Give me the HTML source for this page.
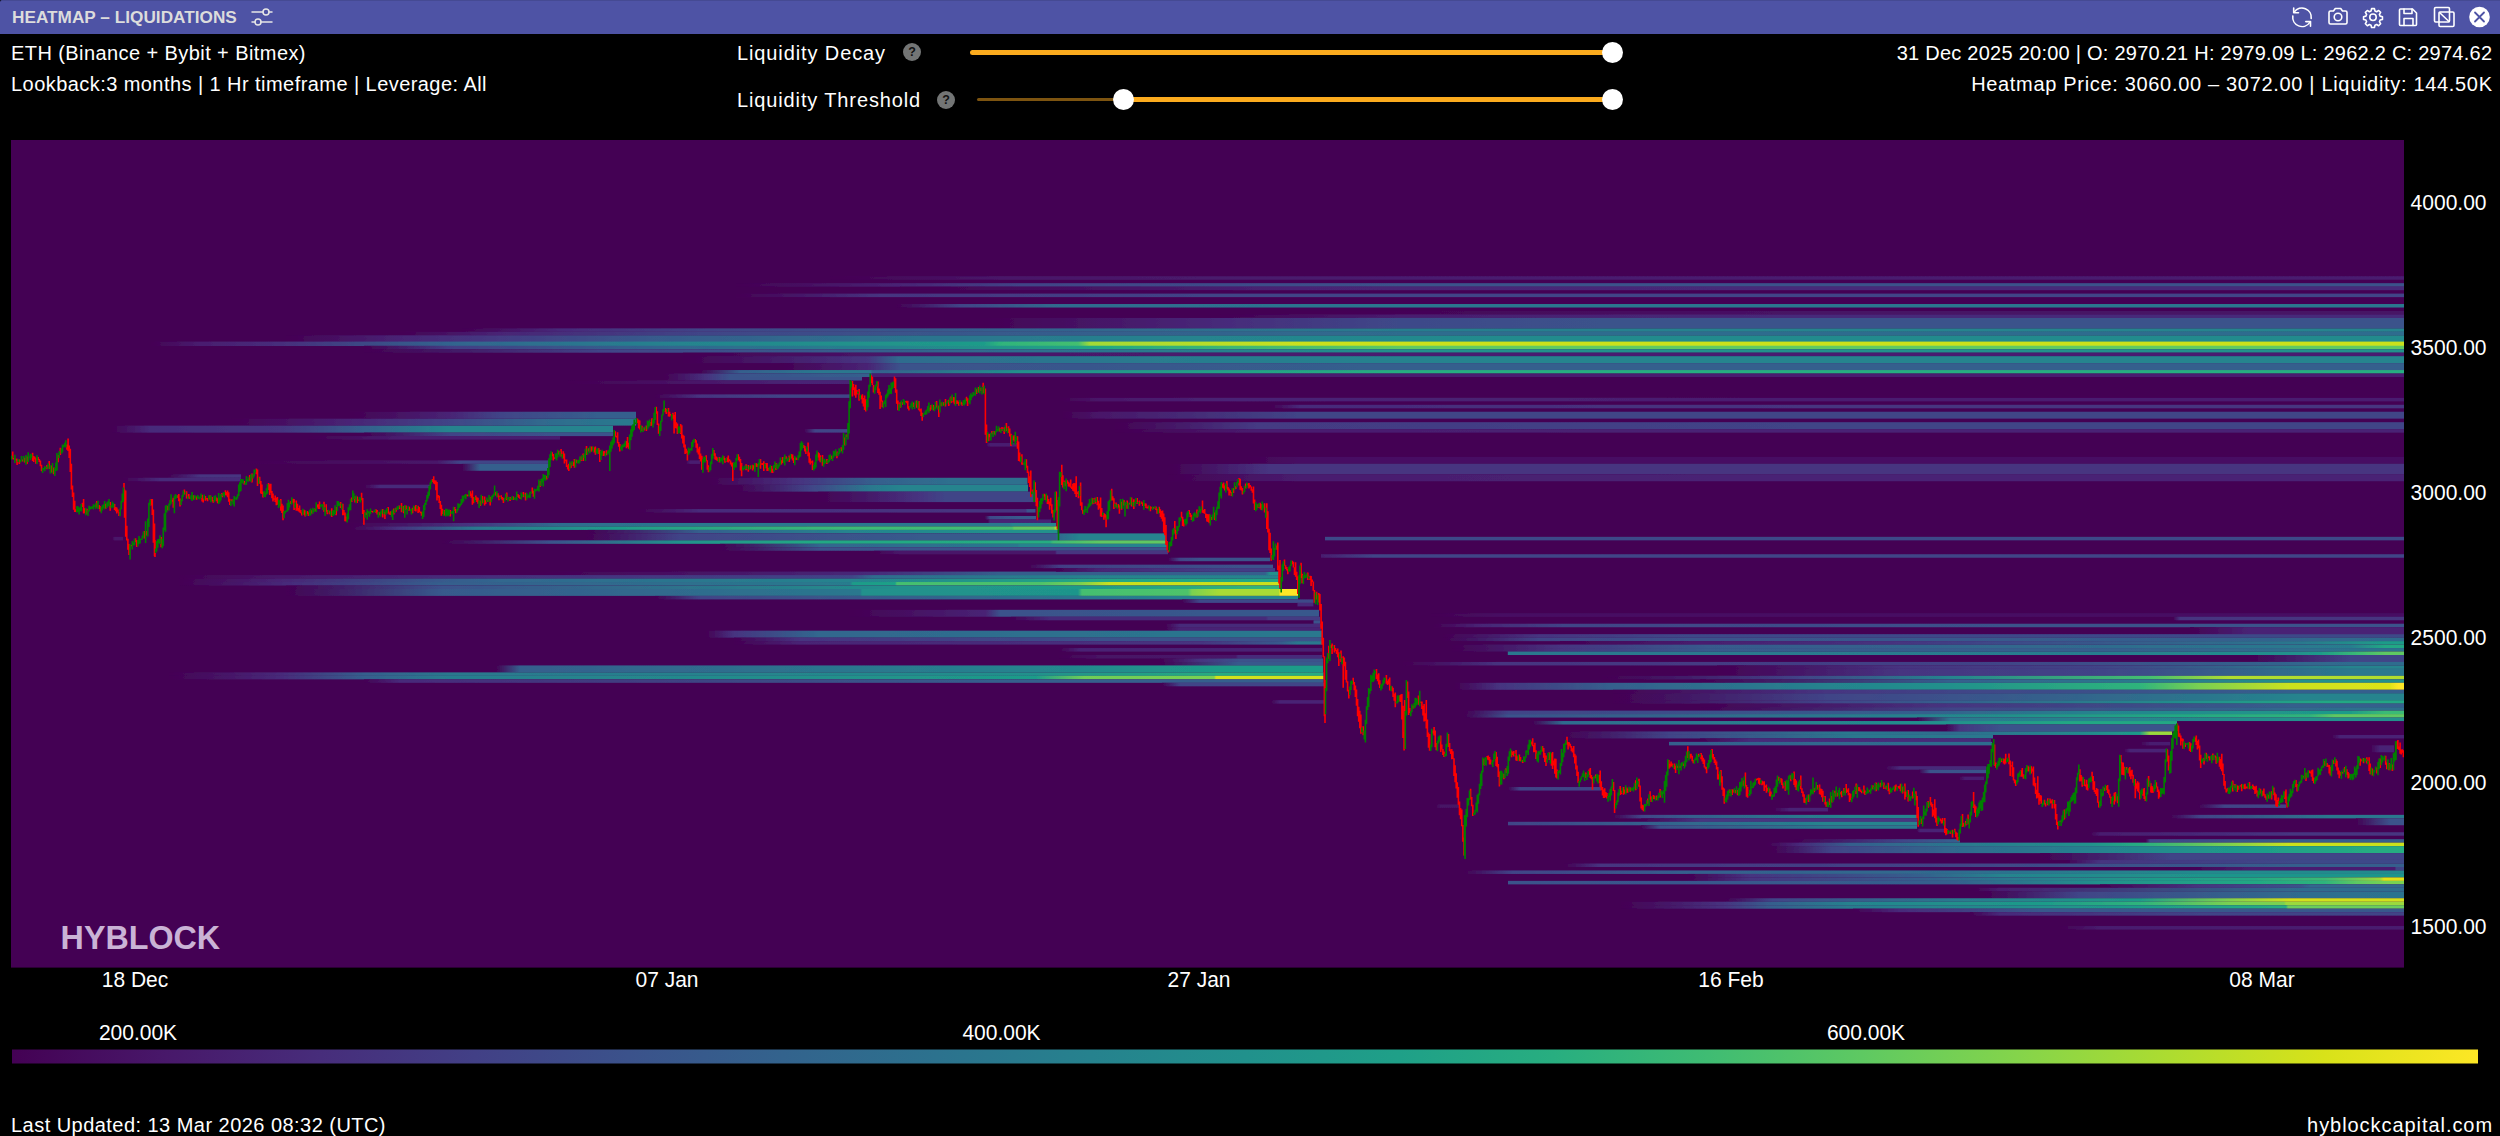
<!DOCTYPE html>
<html lang="en"><head><meta charset="utf-8"><title>Heatmap - Liquidations</title>
<style>
html,body{margin:0;padding:0;background:#000}
body{width:2500px;height:1136px;position:relative;overflow:hidden;font-family:"Liberation Sans",sans-serif;color:#fff}
.abs{position:absolute;white-space:nowrap}
#bar{position:absolute;left:0;top:0;width:2500px;height:33.5px;background:#4e53a5;border-top-left-radius:2px;border-top:1px solid #454a93;box-sizing:border-box}
#title{left:12px;top:6.9px;font-size:17.2px;font-weight:bold;color:#dcdcdc;letter-spacing:0px;line-height:20px}
.t{font-size:20px;line-height:24px;color:#fff}
.ax{font-size:20px;line-height:24px;color:#fff}
.help{position:absolute;width:18px;height:18px;border-radius:50%;background:#737575;color:#111;font-size:12.5px;font-weight:bold;text-align:center;line-height:18.5px}
.thumb{position:absolute;width:21px;height:21px;border-radius:50%;background:#fff}
.trk{position:absolute;height:5.4px;border-radius:2.7px;background:#fbab1e}
svg{position:absolute;left:0;top:0}
</style></head><body>
<div id="bar"></div>
<div class="abs" id="title" style="letter-spacing:0.02px">HEATMAP – LIQUIDATIONS</div>
<svg id="icons" width="2500" height="34" viewBox="0 0 2500 34" fill="none" stroke="#fff" stroke-width="1.6" stroke-linecap="round" stroke-linejoin="round">
<!-- sliders icon -->
<g stroke="#e6e6e6" stroke-width="1.5"><path d="M252 12h11M269 12h3M252 22h3M261 22h11"/><circle cx="266" cy="12" r="3"/><circle cx="258" cy="22" r="3"/></g>
<!-- refresh -->
<g><path d="M2311.2 18.5A9.3 9.3 0 0 0 2294.4 11.900M2292.8 15.950A9.3 9.3 0 0 0 2309.600 22.600"/><path d="M2293.700 8V12.800H2298.500M2310.500 26.200V21.600H2305.800"/></g>
<!-- camera -->
<g><path d="M2329 12.5a1.5 1.5 0 0 1 1.500-1.500h3l1.800-2.500h5.400l1.800 2.500h3a1.500 1.500 0 0 1 1.500 1.500v10a1.500 1.500 0 0 1-1.500 1.500h-15a1.500 1.500 0 0 1-1.500-1.500z"/><circle cx="2338" cy="17" r="3.800"/></g>
<!-- gear -->
<g transform="translate(2373 17.2) scale(0.9)" stroke-width="1.75"><circle r="3.6"/><path d="M-1.600-9.500h3.200l.6 2.600 1.800.8 2.300-1.400 2.200 2.200-1.400 2.300.8 1.800 2.600.6v3.200l-2.600.6-.8 1.800 1.400 2.300-2.200 2.200-2.300-1.400-1.800.8-.6 2.600h-3.200l-.6-2.600-1.800-.8-2.300 1.400-2.200-2.200 1.400-2.300-.8-1.800-2.600-.6v-3.200l2.600-.6.8-1.800-1.400-2.300 2.200-2.200 2.300 1.400 1.800-.8z"/></g>
<!-- save -->
<g><path d="M2400.500 9h12l4 4v11.500a1 1 0 0 1-1 1h-15a1 1 0 0 1-1-1v-14.500a1 1 0 0 1 1-1z"/><path d="M2404 9v4.500h8v-4.500M2404 25.500v-7h9v7"/></g>
<!-- copy -->
<g><rect x="2434.500" y="7.500" width="15" height="14.500" rx="1.200"/><rect x="2439" y="12" width="15" height="14.500" rx="1.200"/><path d="M2439.500 12.500l9.500 9"/></g>
<!-- close -->
<g><circle cx="2479.500" cy="17" r="10.300" fill="#fff" stroke="none"/><path d="M2475 12.500l9 9M2484 12.500l-9 9" stroke="#4e53a5" stroke-width="1.800"/></g>

</svg>

<div class="abs t" id="l1" style="letter-spacing:0.42px;left:11px;top:40.9px">ETH (Binance + Bybit + Bitmex)</div>
<div class="abs t" id="l2" style="letter-spacing:0.44px;left:11px;top:71.9px">Lookback:3 months | 1 Hr timeframe | Leverage: All</div>
<div class="abs t" id="m1" style="letter-spacing:0.89px;left:737px;top:40.9px">Liquidity Decay</div>
<div class="help" style="left:903px;top:43.2px">?</div>
<div class="abs t" id="m2" style="letter-spacing:0.87px;left:737px;top:87.9px">Liquidity Threshold</div>
<div class="help" style="left:937.2px;top:90.6px">?</div>
<div class="trk" style="left:970px;top:49.5px;width:642px"></div>
<div class="thumb" style="left:1601.5px;top:41.7px"></div>
<div class="trk" style="left:977.2px;top:97.75px;width:146px;height:3.7px;background:#7d5410"></div>
<div class="trk" style="left:1123px;top:96.9px;width:489px"></div>
<div class="thumb" style="left:1113.1px;top:89.1px"></div>
<div class="thumb" style="left:1601.5px;top:89.1px"></div>
<div class="abs t" id="r1" style="letter-spacing:0.25px;right:7.75px;top:40.9px">31 Dec 2025 20:00 | O: 2970.21 H: 2979.09 L: 2962.2 C: 2974.62</div>
<div class="abs t" id="r2" style="letter-spacing:0.68px;right:7.3px;top:71.9px">Heatmap Price: 3060.00 – 3072.00 | Liquidity: 144.50K</div>

<svg id="chart" width="2500" height="1136" viewBox="0 0 2500 1136">
<defs>
<filter id="vb" x="0" y="0" width="100%" height="100%" filterUnits="userSpaceOnUse"><feGaussianBlur stdDeviation="0.01 0.6"/></filter>
<clipPath id="cp"><rect x="11" y="140" width="2393" height="827.6"/></clipPath>
<linearGradient id="cbar" x1="0" x2="1" y1="0" y2="0"><stop offset="0.0000" stop-color="#440154"/><stop offset="0.0625" stop-color="#48186a"/><stop offset="0.1250" stop-color="#472d7b"/><stop offset="0.1875" stop-color="#424086"/><stop offset="0.2500" stop-color="#3b528b"/><stop offset="0.3125" stop-color="#33638d"/><stop offset="0.3750" stop-color="#2c728e"/><stop offset="0.4375" stop-color="#26828e"/><stop offset="0.5000" stop-color="#21918c"/><stop offset="0.5625" stop-color="#1fa088"/><stop offset="0.6250" stop-color="#28ae80"/><stop offset="0.6875" stop-color="#3fbc73"/><stop offset="0.7500" stop-color="#5ec962"/><stop offset="0.8125" stop-color="#84d44b"/><stop offset="0.8750" stop-color="#addc30"/><stop offset="0.9375" stop-color="#d8e219"/><stop offset="1.0000" stop-color="#fde725"/></linearGradient>
<linearGradient id="g0" gradientUnits="userSpaceOnUse" x1="830" x2="2404" y1="0" y2="0"><stop offset="0.0000" stop-color="#440154"/><stop offset="0.1080" stop-color="#481769"/><stop offset="0.3621" stop-color="#481d6f"/></linearGradient>
<linearGradient id="g1" gradientUnits="userSpaceOnUse" x1="736" x2="2404" y1="0" y2="0"><stop offset="0.0000" stop-color="#440154"/><stop offset="0.0983" stop-color="#482475"/><stop offset="0.1703" stop-color="#414487"/><stop offset="0.3981" stop-color="#3b528b"/></linearGradient>
<linearGradient id="g2" gradientUnits="userSpaceOnUse" x1="900" x2="2404" y1="0" y2="0"><stop offset="0.0000" stop-color="#440154"/><stop offset="0.2660" stop-color="#482475"/><stop offset="0.5984" stop-color="#472a7a"/></linearGradient>
<linearGradient id="g3" gradientUnits="userSpaceOnUse" x1="736" x2="2404" y1="0" y2="0"><stop offset="0.0000" stop-color="#440154"/><stop offset="0.0863" stop-color="#463480"/><stop offset="0.2782" stop-color="#414487"/></linearGradient>
<linearGradient id="g4" gradientUnits="userSpaceOnUse" x1="896" x2="2404" y1="0" y2="0"><stop offset="0.0000" stop-color="#440154"/><stop offset="0.0424" stop-color="#414487"/><stop offset="0.1088" stop-color="#2f6c8e"/><stop offset="0.3342" stop-color="#2a788e"/></linearGradient>
<linearGradient id="g5" gradientUnits="userSpaceOnUse" x1="1300" x2="2404" y1="0" y2="0"><stop offset="0.0000" stop-color="#440154"/><stop offset="0.4529" stop-color="#471365"/></linearGradient>
<linearGradient id="g6" gradientUnits="userSpaceOnUse" x1="1220" x2="2404" y1="0" y2="0"><stop offset="0.0000" stop-color="#440154"/><stop offset="0.1520" stop-color="#481d6f"/><stop offset="0.4899" stop-color="#472a7a"/></linearGradient>
<linearGradient id="g7" gradientUnits="userSpaceOnUse" x1="980" x2="2404" y1="0" y2="0"><stop offset="0.0000" stop-color="#440154"/><stop offset="0.1685" stop-color="#472a7a"/><stop offset="0.2949" stop-color="#3e4989"/><stop offset="0.4354" stop-color="#3b528b"/></linearGradient>
<linearGradient id="g8" gradientUnits="userSpaceOnUse" x1="462" x2="2404" y1="0" y2="0"><stop offset="0.0000" stop-color="#440154"/><stop offset="0.0505" stop-color="#472a7a"/><stop offset="0.1226" stop-color="#414487"/><stop offset="0.2770" stop-color="#355f8d"/><stop offset="0.4830" stop-color="#287d8e"/><stop offset="0.6890" stop-color="#25848e"/></linearGradient>
<linearGradient id="g9" gradientUnits="userSpaceOnUse" x1="400" x2="2404" y1="0" y2="0"><stop offset="0.0000" stop-color="#440154"/><stop offset="0.0499" stop-color="#482475"/><stop offset="0.1497" stop-color="#414487"/><stop offset="0.2994" stop-color="#375a8c"/><stop offset="0.4990" stop-color="#2f6c8e"/></linearGradient>
<linearGradient id="g10" gradientUnits="userSpaceOnUse" x1="286" x2="2404" y1="0" y2="0"><stop offset="0.0000" stop-color="#440154"/><stop offset="0.0538" stop-color="#482475"/><stop offset="0.1010" stop-color="#443a83"/><stop offset="0.1719" stop-color="#375a8c"/><stop offset="0.2899" stop-color="#2c738e"/><stop offset="0.4315" stop-color="#25848e"/><stop offset="0.5732" stop-color="#228b8d"/></linearGradient>
<linearGradient id="g11" gradientUnits="userSpaceOnUse" x1="151" x2="2404" y1="0" y2="0"><stop offset="0.0000" stop-color="#440154"/><stop offset="0.0217" stop-color="#481d6f"/><stop offset="0.0573" stop-color="#472e7c"/><stop offset="0.1327" stop-color="#32648e"/><stop offset="0.2348" stop-color="#25848e"/><stop offset="0.3697" stop-color="#1e9c89"/><stop offset="0.3768" stop-color="#2fb47c"/><stop offset="0.4115" stop-color="#44bf70"/><stop offset="0.4168" stop-color="#a2da37"/><stop offset="0.5100" stop-color="#cae11f"/></linearGradient>
<linearGradient id="g12" gradientUnits="userSpaceOnUse" x1="364" x2="2404" y1="0" y2="0"><stop offset="0.0000" stop-color="#440154"/><stop offset="0.0422" stop-color="#433e85"/><stop offset="0.1402" stop-color="#32648e"/><stop offset="0.2627" stop-color="#25848e"/><stop offset="0.3608" stop-color="#22a884"/><stop offset="0.5078" stop-color="#5ec962"/></linearGradient>
<linearGradient id="g13" gradientUnits="userSpaceOnUse" x1="364" x2="2404" y1="0" y2="0"><stop offset="0.0000" stop-color="#440154"/><stop offset="0.1157" stop-color="#414487"/><stop offset="0.3118" stop-color="#2f6c8e"/><stop offset="0.5078" stop-color="#21918c"/></linearGradient>
<linearGradient id="g14" gradientUnits="userSpaceOnUse" x1="683" x2="2404" y1="0" y2="0"><stop offset="0.0000" stop-color="#440154"/><stop offset="0.1261" stop-color="#481769"/><stop offset="0.4166" stop-color="#481d6f"/></linearGradient>
<linearGradient id="g15" gradientUnits="userSpaceOnUse" x1="683" x2="2404" y1="0" y2="0"><stop offset="0.0000" stop-color="#440154"/><stop offset="0.1075" stop-color="#463480"/><stop offset="0.1261" stop-color="#2f6c8e"/><stop offset="0.3004" stop-color="#287d8e"/><stop offset="0.4747" stop-color="#25848e"/></linearGradient>
<linearGradient id="g16" gradientUnits="userSpaceOnUse" x1="780" x2="2404" y1="0" y2="0"><stop offset="0.0000" stop-color="#440154"/><stop offset="0.0542" stop-color="#482475"/><stop offset="0.0739" stop-color="#3b528b"/><stop offset="0.3818" stop-color="#355f8d"/></linearGradient>
<linearGradient id="g17" gradientUnits="userSpaceOnUse" x1="700" x2="2404" y1="0" y2="0"><stop offset="0.0000" stop-color="#440154"/><stop offset="0.0235" stop-color="#355f8d"/><stop offset="0.0681" stop-color="#2a788e"/><stop offset="0.1004" stop-color="#2a788e"/><stop offset="0.1009" stop-color="#355f8d"/><stop offset="0.1878" stop-color="#21918c"/><stop offset="0.4108" stop-color="#26ad81"/></linearGradient>
<linearGradient id="g18" gradientUnits="userSpaceOnUse" x1="664" x2="2404" y1="0" y2="0"><stop offset="0.0000" stop-color="#440154"/><stop offset="0.0253" stop-color="#463480"/><stop offset="0.0379" stop-color="#3b528b"/><stop offset="0.1190" stop-color="#355f8d"/><stop offset="0.1195" stop-color="#481d6f"/></linearGradient>
<linearGradient id="g19" gradientUnits="userSpaceOnUse" x1="664" x2="862" y1="0" y2="0"><stop offset="0.0000" stop-color="#440154"/><stop offset="0.2222" stop-color="#463480"/><stop offset="0.3333" stop-color="#3b528b"/></linearGradient>
<linearGradient id="g20" gradientUnits="userSpaceOnUse" x1="568" x2="851" y1="0" y2="0"><stop offset="0.0000" stop-color="#440154"/><stop offset="0.4664" stop-color="#481769"/><stop offset="0.8198" stop-color="#482475"/></linearGradient>
<linearGradient id="g21" gradientUnits="userSpaceOnUse" x1="655" x2="850" y1="0" y2="0"><stop offset="0.0000" stop-color="#440154"/><stop offset="0.2308" stop-color="#463480"/><stop offset="0.6410" stop-color="#414487"/></linearGradient>
<linearGradient id="g22" gradientUnits="userSpaceOnUse" x1="350" x2="636" y1="0" y2="0"><stop offset="0.0000" stop-color="#440154"/><stop offset="0.3497" stop-color="#482475"/><stop offset="0.5245" stop-color="#414487"/><stop offset="0.8741" stop-color="#355f8d"/></linearGradient>
<linearGradient id="g23" gradientUnits="userSpaceOnUse" x1="230" x2="636" y1="0" y2="0"><stop offset="0.0000" stop-color="#440154"/><stop offset="0.2956" stop-color="#482475"/><stop offset="0.5419" stop-color="#414487"/><stop offset="0.7882" stop-color="#2f6c8e"/><stop offset="0.9606" stop-color="#2a788e"/></linearGradient>
<linearGradient id="g24" gradientUnits="userSpaceOnUse" x1="112" x2="613" y1="0" y2="0"><stop offset="0.0000" stop-color="#440154"/><stop offset="0.0758" stop-color="#472a7a"/><stop offset="0.3353" stop-color="#463480"/><stop offset="0.5030" stop-color="#355f8d"/><stop offset="0.6707" stop-color="#25848e"/></linearGradient>
<linearGradient id="g25" gradientUnits="userSpaceOnUse" x1="364" x2="613" y1="0" y2="0"><stop offset="0.0000" stop-color="#440154"/><stop offset="0.3454" stop-color="#414487"/><stop offset="0.7470" stop-color="#3b528b"/></linearGradient>
<linearGradient id="g26" gradientUnits="userSpaceOnUse" x1="308" x2="560" y1="0" y2="0"><stop offset="0.0000" stop-color="#440154"/><stop offset="0.3651" stop-color="#481d6f"/></linearGradient>
<linearGradient id="g27" gradientUnits="userSpaceOnUse" x1="804" x2="849" y1="0" y2="0"><stop offset="0.0000" stop-color="#440154"/><stop offset="0.2444" stop-color="#414487"/></linearGradient>
<linearGradient id="g28" gradientUnits="userSpaceOnUse" x1="238" x2="549" y1="0" y2="0"><stop offset="0.0000" stop-color="#440154"/><stop offset="0.6399" stop-color="#481769"/><stop offset="0.7138" stop-color="#414487"/></linearGradient>
<linearGradient id="g29" gradientUnits="userSpaceOnUse" x1="462" x2="549" y1="0" y2="0"><stop offset="0.0000" stop-color="#440154"/><stop offset="0.2069" stop-color="#355f8d"/></linearGradient>
<linearGradient id="g30" gradientUnits="userSpaceOnUse" x1="168" x2="241" y1="0" y2="0"><stop offset="0.0000" stop-color="#440154"/><stop offset="0.4384" stop-color="#463480"/></linearGradient>
<linearGradient id="g31" gradientUnits="userSpaceOnUse" x1="123" x2="241" y1="0" y2="0"><stop offset="0.0000" stop-color="#440154"/><stop offset="0.3136" stop-color="#472a7a"/></linearGradient>
<linearGradient id="g32" gradientUnits="userSpaceOnUse" x1="364" x2="430" y1="0" y2="0"><stop offset="0.0000" stop-color="#440154"/><stop offset="0.2424" stop-color="#472a7a"/></linearGradient>
<linearGradient id="g33" gradientUnits="userSpaceOnUse" x1="686" x2="700" y1="0" y2="0"><stop offset="0.0000" stop-color="#440154"/><stop offset="0.2857" stop-color="#481d6f"/></linearGradient>
<linearGradient id="g34" gradientUnits="userSpaceOnUse" x1="709" x2="1027.5" y1="0" y2="0"><stop offset="0.0000" stop-color="#440154"/><stop offset="0.2857" stop-color="#463480"/><stop offset="0.5181" stop-color="#355f8d"/><stop offset="0.7567" stop-color="#2e6f8e"/></linearGradient>
<linearGradient id="g35" gradientUnits="userSpaceOnUse" x1="737" x2="1028" y1="0" y2="0"><stop offset="0.0000" stop-color="#440154"/><stop offset="0.2509" stop-color="#414487"/><stop offset="0.4570" stop-color="#2a788e"/><stop offset="0.5670" stop-color="#25848e"/></linearGradient>
<linearGradient id="g36" gradientUnits="userSpaceOnUse" x1="818" x2="1036" y1="0" y2="0"><stop offset="0.0000" stop-color="#440154"/><stop offset="0.4679" stop-color="#463480"/><stop offset="0.5780" stop-color="#414487"/></linearGradient>
<linearGradient id="g37" gradientUnits="userSpaceOnUse" x1="638" x2="1035.5" y1="0" y2="0"><stop offset="0.0000" stop-color="#440154"/><stop offset="0.1560" stop-color="#472a7a"/><stop offset="0.7849" stop-color="#463480"/><stop offset="0.9761" stop-color="#463480"/><stop offset="0.9786" stop-color="#3b528b"/></linearGradient>
<linearGradient id="g38" gradientUnits="userSpaceOnUse" x1="985" x2="1036" y1="0" y2="0"><stop offset="0.0000" stop-color="#440154"/><stop offset="0.0980" stop-color="#3e4989"/><stop offset="0.6863" stop-color="#375a8c"/></linearGradient>
<linearGradient id="g39" gradientUnits="userSpaceOnUse" x1="988" x2="1051" y1="0" y2="0"><stop offset="0.0000" stop-color="#440154"/><stop offset="0.0317" stop-color="#482475"/></linearGradient>
<linearGradient id="g40" gradientUnits="userSpaceOnUse" x1="350" x2="1056" y1="0" y2="0"><stop offset="0.0000" stop-color="#440154"/><stop offset="0.1700" stop-color="#463480"/><stop offset="0.2975" stop-color="#2f6c8e"/><stop offset="0.4958" stop-color="#2a788e"/><stop offset="0.9348" stop-color="#2a788e"/><stop offset="0.9377" stop-color="#25848e"/></linearGradient>
<linearGradient id="g41" gradientUnits="userSpaceOnUse" x1="350" x2="1057.7" y1="0" y2="0"><stop offset="0.0000" stop-color="#440154"/><stop offset="0.0707" stop-color="#463480"/><stop offset="0.1780" stop-color="#2a788e"/><stop offset="0.3759" stop-color="#1e9c89"/><stop offset="0.6966" stop-color="#3bbb75"/><stop offset="0.9354" stop-color="#44bf70"/><stop offset="0.9383" stop-color="#5ec962"/><stop offset="0.9948" stop-color="#63cb5f"/><stop offset="0.9962" stop-color="#a2da37"/></linearGradient>
<linearGradient id="g42" gradientUnits="userSpaceOnUse" x1="588" x2="1057.7" y1="0" y2="0"><stop offset="0.0000" stop-color="#440154"/><stop offset="0.2385" stop-color="#355f8d"/><stop offset="0.5578" stop-color="#25848e"/><stop offset="0.8772" stop-color="#21918c"/></linearGradient>
<linearGradient id="g43" gradientUnits="userSpaceOnUse" x1="586" x2="1166" y1="0" y2="0"><stop offset="0.0000" stop-color="#440154"/><stop offset="0.1621" stop-color="#414487"/><stop offset="0.5759" stop-color="#375a8c"/><stop offset="0.8103" stop-color="#375a8c"/><stop offset="0.8121" stop-color="#31678e"/><stop offset="0.8517" stop-color="#25848e"/></linearGradient>
<linearGradient id="g44" gradientUnits="userSpaceOnUse" x1="442" x2="1167" y1="0" y2="0"><stop offset="0.0000" stop-color="#440154"/><stop offset="0.1490" stop-color="#3b528b"/><stop offset="0.3283" stop-color="#21918c"/><stop offset="0.5034" stop-color="#22a884"/><stop offset="0.8386" stop-color="#26ad81"/><stop offset="0.8428" stop-color="#3bbb75"/><stop offset="0.9076" stop-color="#5ec962"/></linearGradient>
<linearGradient id="g45" gradientUnits="userSpaceOnUse" x1="720" x2="1167" y1="0" y2="0"><stop offset="0.0000" stop-color="#440154"/><stop offset="0.2237" stop-color="#31678e"/><stop offset="0.6667" stop-color="#2a788e"/><stop offset="0.6711" stop-color="#25848e"/></linearGradient>
<linearGradient id="g46" gradientUnits="userSpaceOnUse" x1="720" x2="1167" y1="0" y2="0"><stop offset="0.0000" stop-color="#440154"/><stop offset="0.2237" stop-color="#3b528b"/></linearGradient>
<linearGradient id="g47" gradientUnits="userSpaceOnUse" x1="874" x2="1168" y1="0" y2="0"><stop offset="0.0000" stop-color="#440154"/><stop offset="0.0884" stop-color="#481769"/><stop offset="0.6156" stop-color="#481769"/><stop offset="0.6224" stop-color="#463480"/></linearGradient>
<linearGradient id="g48" gradientUnits="userSpaceOnUse" x1="112" x2="123" y1="0" y2="0"><stop offset="0.0000" stop-color="#440154"/><stop offset="0.2727" stop-color="#481769"/></linearGradient>
<linearGradient id="g49" gradientUnits="userSpaceOnUse" x1="532" x2="1279.5" y1="0" y2="0"><stop offset="0.0000" stop-color="#440154"/><stop offset="0.2247" stop-color="#471365"/><stop offset="0.4575" stop-color="#472a7a"/><stop offset="0.6261" stop-color="#355f8d"/><stop offset="0.9806" stop-color="#355f8d"/><stop offset="0.9873" stop-color="#21918c"/></linearGradient>
<linearGradient id="g50" gradientUnits="userSpaceOnUse" x1="179" x2="1279.5" y1="0" y2="0"><stop offset="0.0000" stop-color="#440154"/><stop offset="0.0918" stop-color="#481769"/><stop offset="0.2390" stop-color="#472a7a"/><stop offset="0.6115" stop-color="#414487"/><stop offset="0.6315" stop-color="#2f6c8e"/><stop offset="0.8369" stop-color="#25848e"/></linearGradient>
<linearGradient id="g51" gradientUnits="userSpaceOnUse" x1="179" x2="1279.5" y1="0" y2="0"><stop offset="0.0000" stop-color="#440154"/><stop offset="0.0918" stop-color="#482475"/><stop offset="0.2390" stop-color="#375a8c"/><stop offset="0.2917" stop-color="#31678e"/><stop offset="0.6115" stop-color="#25848e"/><stop offset="0.8369" stop-color="#22a884"/></linearGradient>
<linearGradient id="g52" gradientUnits="userSpaceOnUse" x1="179" x2="1279.5" y1="0" y2="0"><stop offset="0.0000" stop-color="#440154"/><stop offset="0.0972" stop-color="#472a7a"/><stop offset="0.2390" stop-color="#355f8d"/><stop offset="0.5643" stop-color="#2a788e"/><stop offset="0.6097" stop-color="#287d8e"/><stop offset="0.6124" stop-color="#1e9c89"/><stop offset="0.6506" stop-color="#1fa188"/><stop offset="0.6524" stop-color="#44bf70"/><stop offset="0.7824" stop-color="#4ec36b"/><stop offset="0.8187" stop-color="#7ad151"/><stop offset="0.8460" stop-color="#cae11f"/></linearGradient>
<linearGradient id="g53" gradientUnits="userSpaceOnUse" x1="286" x2="1279.5" y1="0" y2="0"><stop offset="0.0000" stop-color="#440154"/><stop offset="0.1570" stop-color="#3b528b"/><stop offset="0.6200" stop-color="#21918c"/><stop offset="0.8193" stop-color="#1e9c89"/><stop offset="0.9804" stop-color="#2fb47c"/></linearGradient>
<linearGradient id="g54" gradientUnits="userSpaceOnUse" x1="286" x2="1298" y1="0" y2="0"><stop offset="0.0000" stop-color="#440154"/><stop offset="0.1542" stop-color="#375a8c"/><stop offset="0.5672" stop-color="#2a788e"/><stop offset="0.5692" stop-color="#21918c"/><stop offset="0.7826" stop-color="#1f958b"/><stop offset="0.7866" stop-color="#44bf70"/><stop offset="0.8913" stop-color="#4ec36b"/><stop offset="0.8953" stop-color="#7ad151"/><stop offset="0.9229" stop-color="#a8db34"/><stop offset="0.9812" stop-color="#a8db34"/><stop offset="0.9822" stop-color="#fde725"/></linearGradient>
<linearGradient id="g55" gradientUnits="userSpaceOnUse" x1="655" x2="1298" y1="0" y2="0"><stop offset="0.0000" stop-color="#440154"/><stop offset="0.0700" stop-color="#414487"/><stop offset="0.5365" stop-color="#2f6c8e"/><stop offset="0.8476" stop-color="#25848e"/></linearGradient>
<linearGradient id="g56" gradientUnits="userSpaceOnUse" x1="1182" x2="1313.4" y1="0" y2="0"><stop offset="0.0000" stop-color="#440154"/><stop offset="0.1370" stop-color="#3e4989"/></linearGradient>
<linearGradient id="g57" gradientUnits="userSpaceOnUse" x1="1297" x2="1313.4" y1="0" y2="0"><stop offset="0.0000" stop-color="#440154"/><stop offset="0.0610" stop-color="#472a7a"/></linearGradient>
<linearGradient id="g58" gradientUnits="userSpaceOnUse" x1="1168" x2="1270" y1="0" y2="0"><stop offset="0.0000" stop-color="#440154"/><stop offset="0.1176" stop-color="#414487"/><stop offset="0.3137" stop-color="#3b528b"/></linearGradient>
<linearGradient id="g59" gradientUnits="userSpaceOnUse" x1="1028" x2="1273" y1="0" y2="0"><stop offset="0.0000" stop-color="#440154"/><stop offset="0.1306" stop-color="#433e85"/><stop offset="0.8653" stop-color="#3b528b"/></linearGradient>
<linearGradient id="g60" gradientUnits="userSpaceOnUse" x1="1056" x2="1275" y1="0" y2="0"><stop offset="0.0000" stop-color="#440154"/><stop offset="0.2009" stop-color="#482475"/><stop offset="0.7489" stop-color="#433e85"/></linearGradient>
<linearGradient id="g61" gradientUnits="userSpaceOnUse" x1="849" x2="1319" y1="0" y2="0"><stop offset="0.0000" stop-color="#440154"/><stop offset="0.2915" stop-color="#482475"/><stop offset="0.3213" stop-color="#3b528b"/><stop offset="0.7468" stop-color="#38588c"/></linearGradient>
<linearGradient id="g62" gradientUnits="userSpaceOnUse" x1="1011" x2="1320" y1="0" y2="0"><stop offset="0.0000" stop-color="#440154"/><stop offset="0.1262" stop-color="#472a7a"/><stop offset="0.8252" stop-color="#472a7a"/><stop offset="0.8317" stop-color="#443a83"/></linearGradient>
<linearGradient id="g63" gradientUnits="userSpaceOnUse" x1="1313" x2="1320" y1="0" y2="0"><stop offset="0.0000" stop-color="#440154"/><stop offset="0.1429" stop-color="#3b528b"/></linearGradient>
<linearGradient id="g64" gradientUnits="userSpaceOnUse" x1="1165" x2="1321" y1="0" y2="0"><stop offset="0.0000" stop-color="#440154"/><stop offset="0.0962" stop-color="#472a7a"/></linearGradient>
<linearGradient id="g65" gradientUnits="userSpaceOnUse" x1="1165" x2="1321" y1="0" y2="0"><stop offset="0.0000" stop-color="#440154"/><stop offset="0.0962" stop-color="#482475"/></linearGradient>
<linearGradient id="g66" gradientUnits="userSpaceOnUse" x1="706" x2="1322" y1="0" y2="0"><stop offset="0.0000" stop-color="#440154"/><stop offset="0.0455" stop-color="#463480"/><stop offset="0.1818" stop-color="#31678e"/><stop offset="0.5097" stop-color="#2e6f8e"/><stop offset="0.9172" stop-color="#2a788e"/></linearGradient>
<linearGradient id="g67" gradientUnits="userSpaceOnUse" x1="734" x2="1322" y1="0" y2="0"><stop offset="0.0000" stop-color="#440154"/><stop offset="0.1122" stop-color="#463480"/><stop offset="0.6224" stop-color="#3b528b"/></linearGradient>
<linearGradient id="g68" gradientUnits="userSpaceOnUse" x1="734" x2="1322" y1="0" y2="0"><stop offset="0.0000" stop-color="#440154"/><stop offset="0.1122" stop-color="#482475"/><stop offset="0.7925" stop-color="#463480"/><stop offset="0.9286" stop-color="#375a8c"/><stop offset="0.9592" stop-color="#2a788e"/></linearGradient>
<linearGradient id="g69" gradientUnits="userSpaceOnUse" x1="1059" x2="1322" y1="0" y2="0"><stop offset="0.0000" stop-color="#440154"/><stop offset="0.0798" stop-color="#482475"/></linearGradient>
<linearGradient id="g70" gradientUnits="userSpaceOnUse" x1="1059" x2="1322" y1="0" y2="0"><stop offset="0.0000" stop-color="#440154"/><stop offset="0.1559" stop-color="#471365"/><stop offset="0.6730" stop-color="#481769"/><stop offset="0.6806" stop-color="#472a7a"/></linearGradient>
<linearGradient id="g71" gradientUnits="userSpaceOnUse" x1="1160" x2="1323" y1="0" y2="0"><stop offset="0.0000" stop-color="#440154"/><stop offset="0.2454" stop-color="#463480"/><stop offset="0.4908" stop-color="#3b528b"/></linearGradient>
<linearGradient id="g72" gradientUnits="userSpaceOnUse" x1="1160" x2="1323" y1="0" y2="0"><stop offset="0.0000" stop-color="#440154"/><stop offset="0.4785" stop-color="#38588c"/></linearGradient>
<linearGradient id="g73" gradientUnits="userSpaceOnUse" x1="496" x2="1323" y1="0" y2="0"><stop offset="0.0000" stop-color="#440154"/><stop offset="0.0290" stop-color="#355f8d"/><stop offset="0.6602" stop-color="#25848e"/><stop offset="0.8755" stop-color="#1e9c89"/></linearGradient>
<linearGradient id="g74" gradientUnits="userSpaceOnUse" x1="169" x2="1323.5" y1="0" y2="0"><stop offset="0.0000" stop-color="#440154"/><stop offset="0.0961" stop-color="#472a7a"/><stop offset="0.1689" stop-color="#355f8d"/><stop offset="0.2417" stop-color="#2a788e"/><stop offset="0.7510" stop-color="#21918c"/><stop offset="0.9104" stop-color="#26ad81"/></linearGradient>
<linearGradient id="g75" gradientUnits="userSpaceOnUse" x1="169" x2="1323.5" y1="0" y2="0"><stop offset="0.0000" stop-color="#440154"/><stop offset="0.0961" stop-color="#472a7a"/><stop offset="0.1689" stop-color="#355f8d"/><stop offset="0.2417" stop-color="#287d8e"/><stop offset="0.7510" stop-color="#1e9c89"/><stop offset="0.7926" stop-color="#6ece58"/><stop offset="0.9052" stop-color="#7ad151"/><stop offset="0.9069" stop-color="#d2e21b"/></linearGradient>
<linearGradient id="g76" gradientUnits="userSpaceOnUse" x1="364" x2="1323.5" y1="0" y2="0"><stop offset="0.0000" stop-color="#440154"/><stop offset="0.0375" stop-color="#472a7a"/><stop offset="0.6628" stop-color="#355f8d"/></linearGradient>
<linearGradient id="g77" gradientUnits="userSpaceOnUse" x1="1162" x2="1324" y1="0" y2="0"><stop offset="0.0000" stop-color="#440154"/><stop offset="0.1111" stop-color="#414487"/></linearGradient>
<linearGradient id="g78" gradientUnits="userSpaceOnUse" x1="1271" x2="1325" y1="0" y2="0"><stop offset="0.0000" stop-color="#440154"/><stop offset="0.1667" stop-color="#482475"/></linearGradient>
<linearGradient id="g79" gradientUnits="userSpaceOnUse" x1="1060" x2="2404" y1="0" y2="0"><stop offset="0.0000" stop-color="#440154"/><stop offset="0.0298" stop-color="#481769"/><stop offset="0.1332" stop-color="#482475"/><stop offset="0.5506" stop-color="#481d6f"/></linearGradient>
<linearGradient id="g80" gradientUnits="userSpaceOnUse" x1="1271" x2="2404" y1="0" y2="0"><stop offset="0.0000" stop-color="#440154"/><stop offset="0.0256" stop-color="#472a7a"/><stop offset="0.4669" stop-color="#463480"/></linearGradient>
<linearGradient id="g81" gradientUnits="userSpaceOnUse" x1="1063" x2="2404" y1="0" y2="0"><stop offset="0.0000" stop-color="#440154"/><stop offset="0.0276" stop-color="#481769"/><stop offset="0.1745" stop-color="#414487"/></linearGradient>
<linearGradient id="g82" gradientUnits="userSpaceOnUse" x1="1115" x2="2404" y1="0" y2="0"><stop offset="0.0000" stop-color="#440154"/><stop offset="0.1094" stop-color="#443a83"/><stop offset="0.5314" stop-color="#414487"/></linearGradient>
<linearGradient id="g83" gradientUnits="userSpaceOnUse" x1="1115" x2="2404" y1="0" y2="0"><stop offset="0.0000" stop-color="#440154"/><stop offset="0.1094" stop-color="#481d6f"/><stop offset="0.5314" stop-color="#482475"/></linearGradient>
<linearGradient id="g84" gradientUnits="userSpaceOnUse" x1="1248" x2="2404" y1="0" y2="0"><stop offset="0.0000" stop-color="#440154"/><stop offset="0.0450" stop-color="#471063"/></linearGradient>
<linearGradient id="g85" gradientUnits="userSpaceOnUse" x1="1170" x2="2404" y1="0" y2="0"><stop offset="0.0000" stop-color="#440154"/><stop offset="0.0794" stop-color="#463480"/></linearGradient>
<linearGradient id="g86" gradientUnits="userSpaceOnUse" x1="1168" x2="2404" y1="0" y2="0"><stop offset="0.0000" stop-color="#440154"/><stop offset="0.1068" stop-color="#481d6f"/><stop offset="0.5113" stop-color="#482475"/></linearGradient>
<linearGradient id="g88" gradientUnits="userSpaceOnUse" x1="1321" x2="2404" y1="0" y2="0"><stop offset="0.0000" stop-color="#481d6f"/><stop offset="0.0480" stop-color="#414487"/></linearGradient>
<linearGradient id="g89" gradientUnits="userSpaceOnUse" x1="986" x2="1018" y1="0" y2="0"><stop offset="0.0000" stop-color="#440154"/><stop offset="0.1250" stop-color="#481d6f"/></linearGradient>
<linearGradient id="g90" gradientUnits="userSpaceOnUse" x1="1431" x2="2404" y1="0" y2="0"><stop offset="0.0000" stop-color="#440154"/><stop offset="0.0709" stop-color="#471063"/></linearGradient>
<linearGradient id="g91" gradientUnits="userSpaceOnUse" x1="2173" x2="2404" y1="0" y2="0"><stop offset="0.0000" stop-color="#440154"/><stop offset="0.0303" stop-color="#463480"/></linearGradient>
<linearGradient id="g92" gradientUnits="userSpaceOnUse" x1="1434" x2="2404" y1="0" y2="0"><stop offset="0.0000" stop-color="#440154"/><stop offset="0.0474" stop-color="#482475"/><stop offset="0.1330" stop-color="#414487"/><stop offset="0.5835" stop-color="#3b528b"/></linearGradient>
<linearGradient id="g93" gradientUnits="userSpaceOnUse" x1="2190" x2="2404" y1="0" y2="0"><stop offset="0.0000" stop-color="#440154"/><stop offset="0.2804" stop-color="#482475"/></linearGradient>
<linearGradient id="g94" gradientUnits="userSpaceOnUse" x1="1443" x2="2404" y1="0" y2="0"><stop offset="0.0000" stop-color="#440154"/><stop offset="0.0989" stop-color="#463480"/><stop offset="0.2591" stop-color="#3e4989"/></linearGradient>
<linearGradient id="g95" gradientUnits="userSpaceOnUse" x1="1443" x2="2404" y1="0" y2="0"><stop offset="0.0000" stop-color="#440154"/><stop offset="0.0989" stop-color="#414487"/><stop offset="0.2591" stop-color="#3b528b"/><stop offset="0.7877" stop-color="#355f8d"/><stop offset="0.9750" stop-color="#2f6c8e"/></linearGradient>
<linearGradient id="g96" gradientUnits="userSpaceOnUse" x1="1560" x2="2404" y1="0" y2="0"><stop offset="0.0000" stop-color="#440154"/><stop offset="0.1659" stop-color="#481d6f"/><stop offset="0.4028" stop-color="#463480"/><stop offset="0.5213" stop-color="#3e4989"/><stop offset="0.8768" stop-color="#2a788e"/><stop offset="0.9775" stop-color="#1e9c89"/></linearGradient>
<linearGradient id="g97" gradientUnits="userSpaceOnUse" x1="1452" x2="2404" y1="0" y2="0"><stop offset="0.0000" stop-color="#440154"/><stop offset="0.1134" stop-color="#463480"/><stop offset="0.2668" stop-color="#375a8c"/><stop offset="0.6807" stop-color="#2f6c8e"/><stop offset="0.9433" stop-color="#287d8e"/><stop offset="0.9800" stop-color="#22a884"/></linearGradient>
<linearGradient id="g98" gradientUnits="userSpaceOnUse" x1="1452" x2="2404" y1="0" y2="0"><stop offset="0.0000" stop-color="#440154"/><stop offset="0.1134" stop-color="#463480"/><stop offset="0.2668" stop-color="#375a8c"/><stop offset="0.6807" stop-color="#355f8d"/><stop offset="0.9433" stop-color="#2c738e"/></linearGradient>
<linearGradient id="g99" gradientUnits="userSpaceOnUse" x1="1507.8" x2="2404" y1="0" y2="0"><stop offset="0.0000" stop-color="#2a788e"/><stop offset="0.6608" stop-color="#287d8e"/><stop offset="0.8840" stop-color="#21918c"/><stop offset="0.9063" stop-color="#1e9c89"/><stop offset="0.9487" stop-color="#3bbb75"/><stop offset="0.9788" stop-color="#5ec962"/></linearGradient>
<linearGradient id="g100" gradientUnits="userSpaceOnUse" x1="2250" x2="2404" y1="0" y2="0"><stop offset="0.0000" stop-color="#440154"/><stop offset="0.6494" stop-color="#414487"/></linearGradient>
<linearGradient id="g101" gradientUnits="userSpaceOnUse" x1="1403" x2="2404" y1="0" y2="0"><stop offset="0.0000" stop-color="#440154"/><stop offset="0.0979" stop-color="#463480"/><stop offset="0.5964" stop-color="#414487"/><stop offset="0.9461" stop-color="#2f6c8e"/></linearGradient>
<linearGradient id="g102" gradientUnits="userSpaceOnUse" x1="1717" x2="2404" y1="0" y2="0"><stop offset="0.0000" stop-color="#440154"/><stop offset="0.2664" stop-color="#463480"/><stop offset="0.5575" stop-color="#414487"/><stop offset="0.9214" stop-color="#25848e"/></linearGradient>
<linearGradient id="g103" gradientUnits="userSpaceOnUse" x1="1717" x2="2404" y1="0" y2="0"><stop offset="0.0000" stop-color="#440154"/><stop offset="0.2664" stop-color="#463480"/><stop offset="0.5575" stop-color="#414487"/><stop offset="0.9214" stop-color="#2a788e"/></linearGradient>
<linearGradient id="g104" gradientUnits="userSpaceOnUse" x1="1602" x2="2404" y1="0" y2="0"><stop offset="0.0000" stop-color="#440154"/><stop offset="0.2469" stop-color="#414487"/><stop offset="0.4339" stop-color="#25848e"/><stop offset="0.6833" stop-color="#44bf70"/><stop offset="0.7830" stop-color="#b0dd2f"/></linearGradient>
<linearGradient id="g105" gradientUnits="userSpaceOnUse" x1="1700" x2="2404" y1="0" y2="0"><stop offset="0.0000" stop-color="#440154"/><stop offset="0.3551" stop-color="#355f8d"/><stop offset="0.8523" stop-color="#21918c"/></linearGradient>
<linearGradient id="g106" gradientUnits="userSpaceOnUse" x1="1455" x2="2404" y1="0" y2="0"><stop offset="0.0000" stop-color="#440154"/><stop offset="0.0474" stop-color="#463480"/><stop offset="0.1644" stop-color="#355f8d"/><stop offset="0.3973" stop-color="#25848e"/><stop offset="0.5216" stop-color="#21918c"/><stop offset="0.7218" stop-color="#2fb47c"/><stop offset="0.7850" stop-color="#7ad151"/><stop offset="0.8799" stop-color="#cae11f"/><stop offset="0.9852" stop-color="#dfe318"/><stop offset="0.9937" stop-color="#fde725"/></linearGradient>
<linearGradient id="g107" gradientUnits="userSpaceOnUse" x1="1613" x2="2404" y1="0" y2="0"><stop offset="0.0000" stop-color="#440154"/><stop offset="0.2693" stop-color="#463480"/><stop offset="0.4260" stop-color="#414487"/><stop offset="0.8685" stop-color="#355f8d"/></linearGradient>
<linearGradient id="g108" gradientUnits="userSpaceOnUse" x1="1613" x2="2404" y1="0" y2="0"><stop offset="0.0000" stop-color="#440154"/><stop offset="0.2693" stop-color="#414487"/><stop offset="0.4260" stop-color="#3b528b"/><stop offset="0.8685" stop-color="#25848e"/></linearGradient>
<linearGradient id="g109" gradientUnits="userSpaceOnUse" x1="1613" x2="2404" y1="0" y2="0"><stop offset="0.0000" stop-color="#440154"/><stop offset="0.2693" stop-color="#414487"/><stop offset="0.4260" stop-color="#355f8d"/><stop offset="0.7421" stop-color="#21918c"/><stop offset="0.9064" stop-color="#22a884"/></linearGradient>
<linearGradient id="g110" gradientUnits="userSpaceOnUse" x1="1700" x2="2404" y1="0" y2="0"><stop offset="0.0000" stop-color="#440154"/><stop offset="0.3551" stop-color="#463480"/><stop offset="0.8523" stop-color="#355f8d"/></linearGradient>
<linearGradient id="g111" gradientUnits="userSpaceOnUse" x1="1700" x2="2404" y1="0" y2="0"><stop offset="0.0000" stop-color="#440154"/><stop offset="0.3551" stop-color="#414487"/><stop offset="0.7102" stop-color="#355f8d"/><stop offset="0.9233" stop-color="#2e6f8e"/></linearGradient>
<linearGradient id="g112" gradientUnits="userSpaceOnUse" x1="1464" x2="2404" y1="0" y2="0"><stop offset="0.0000" stop-color="#440154"/><stop offset="0.0468" stop-color="#414487"/><stop offset="0.4957" stop-color="#355f8d"/><stop offset="0.6766" stop-color="#25848e"/><stop offset="0.9426" stop-color="#1e9c89"/><stop offset="0.9798" stop-color="#3bbb75"/></linearGradient>
<linearGradient id="g113" gradientUnits="userSpaceOnUse" x1="1464" x2="2404" y1="0" y2="0"><stop offset="0.0000" stop-color="#440154"/><stop offset="0.0468" stop-color="#3b528b"/><stop offset="0.4957" stop-color="#25848e"/><stop offset="0.7511" stop-color="#22a884"/><stop offset="0.9000" stop-color="#2fb47c"/><stop offset="0.9266" stop-color="#5ec962"/></linearGradient>
<linearGradient id="g114" gradientUnits="userSpaceOnUse" x1="1917" x2="2404" y1="0" y2="0"><stop offset="0.0000" stop-color="#440154"/><stop offset="0.0678" stop-color="#2a788e"/><stop offset="0.7864" stop-color="#21918c"/></linearGradient>
<linearGradient id="g115" gradientUnits="userSpaceOnUse" x1="1532" x2="2177" y1="0" y2="0"><stop offset="0.0000" stop-color="#440154"/><stop offset="0.0481" stop-color="#2f6c8e"/><stop offset="0.6481" stop-color="#21918c"/><stop offset="0.8341" stop-color="#22a884"/></linearGradient>
<linearGradient id="g116" gradientUnits="userSpaceOnUse" x1="1946" x2="2176" y1="0" y2="0"><stop offset="0.0000" stop-color="#440154"/><stop offset="0.0609" stop-color="#463480"/><stop offset="0.2348" stop-color="#3b528b"/></linearGradient>
<linearGradient id="g117" gradientUnits="userSpaceOnUse" x1="1562" x2="2172" y1="0" y2="0"><stop offset="0.0000" stop-color="#440154"/><stop offset="0.1754" stop-color="#414487"/><stop offset="0.4689" stop-color="#2a788e"/><stop offset="0.6361" stop-color="#2f6c8e"/><stop offset="0.8984" stop-color="#21918c"/><stop offset="0.9475" stop-color="#1e9c89"/><stop offset="0.9639" stop-color="#9bd93c"/></linearGradient>
<linearGradient id="g118" gradientUnits="userSpaceOnUse" x1="1562" x2="1993" y1="0" y2="0"><stop offset="0.0000" stop-color="#440154"/><stop offset="0.2483" stop-color="#414487"/><stop offset="0.6798" stop-color="#2a788e"/></linearGradient>
<linearGradient id="g119" gradientUnits="userSpaceOnUse" x1="1700" x2="1991" y1="0" y2="0"><stop offset="0.0000" stop-color="#440154"/><stop offset="0.1718" stop-color="#472a7a"/></linearGradient>
<linearGradient id="g120" gradientUnits="userSpaceOnUse" x1="1669" x2="1992" y1="0" y2="0"><stop offset="0.0000" stop-color="#355f8d"/><stop offset="0.7152" stop-color="#2f6c8e"/></linearGradient>
<linearGradient id="g121" gradientUnits="userSpaceOnUse" x1="2140" x2="2170" y1="0" y2="0"><stop offset="0.0000" stop-color="#440154"/><stop offset="0.3333" stop-color="#481d6f"/></linearGradient>
<linearGradient id="g122" gradientUnits="userSpaceOnUse" x1="2124" x2="2168" y1="0" y2="0"><stop offset="0.0000" stop-color="#440154"/><stop offset="0.1364" stop-color="#482475"/></linearGradient>
<linearGradient id="g123" gradientUnits="userSpaceOnUse" x1="2332" x2="2404" y1="0" y2="0"><stop offset="0.0000" stop-color="#440154"/><stop offset="0.1111" stop-color="#482475"/></linearGradient>
<linearGradient id="g124" gradientUnits="userSpaceOnUse" x1="2370" x2="2394" y1="0" y2="0"><stop offset="0.0000" stop-color="#440154"/><stop offset="0.4167" stop-color="#482475"/></linearGradient>
<linearGradient id="g125" gradientUnits="userSpaceOnUse" x1="1885" x2="1986" y1="0" y2="0"><stop offset="0.0000" stop-color="#440154"/><stop offset="0.1485" stop-color="#472a7a"/></linearGradient>
<linearGradient id="g126" gradientUnits="userSpaceOnUse" x1="1919" x2="1986" y1="0" y2="0"><stop offset="0.0000" stop-color="#440154"/><stop offset="0.1642" stop-color="#3b528b"/></linearGradient>
<linearGradient id="g127" gradientUnits="userSpaceOnUse" x1="1959" x2="1984" y1="0" y2="0"><stop offset="0.0000" stop-color="#440154"/><stop offset="0.2400" stop-color="#481d6f"/></linearGradient>
<linearGradient id="g128" gradientUnits="userSpaceOnUse" x1="1508" x2="1601" y1="0" y2="0"><stop offset="0.0000" stop-color="#440154"/><stop offset="0.1290" stop-color="#414487"/></linearGradient>
<linearGradient id="g129" gradientUnits="userSpaceOnUse" x1="1436" x2="1460" y1="0" y2="0"><stop offset="0.0000" stop-color="#440154"/><stop offset="0.1667" stop-color="#471365"/></linearGradient>
<linearGradient id="g130" gradientUnits="userSpaceOnUse" x1="1773" x2="1828" y1="0" y2="0"><stop offset="0.0000" stop-color="#440154"/><stop offset="0.3091" stop-color="#482475"/></linearGradient>
<linearGradient id="g131" gradientUnits="userSpaceOnUse" x1="1613" x2="1917" y1="0" y2="0"><stop offset="0.0000" stop-color="#440154"/><stop offset="0.0921" stop-color="#414487"/><stop offset="0.2533" stop-color="#355f8d"/><stop offset="0.7796" stop-color="#25848e"/></linearGradient>
<linearGradient id="g132" gradientUnits="userSpaceOnUse" x1="1641" x2="1917" y1="0" y2="0"><stop offset="0.0000" stop-color="#440154"/><stop offset="0.2138" stop-color="#463480"/></linearGradient>
<linearGradient id="g133" gradientUnits="userSpaceOnUse" x1="1508" x2="1917" y1="0" y2="0"><stop offset="0.0000" stop-color="#414487"/><stop offset="0.3252" stop-color="#355f8d"/><stop offset="0.7775" stop-color="#25848e"/></linearGradient>
<linearGradient id="g134" gradientUnits="userSpaceOnUse" x1="1641" x2="1917" y1="0" y2="0"><stop offset="0.0000" stop-color="#440154"/><stop offset="0.0688" stop-color="#3b528b"/><stop offset="0.6703" stop-color="#2a788e"/></linearGradient>
<linearGradient id="g135" gradientUnits="userSpaceOnUse" x1="1917" x2="1945" y1="0" y2="0"><stop offset="0.0000" stop-color="#440154"/><stop offset="0.1071" stop-color="#482475"/></linearGradient>
<linearGradient id="g136" gradientUnits="userSpaceOnUse" x1="1794" x2="1960" y1="0" y2="0"><stop offset="0.0000" stop-color="#440154"/><stop offset="0.6386" stop-color="#414487"/><stop offset="0.9819" stop-color="#355f8d"/></linearGradient>
<linearGradient id="g137" gradientUnits="userSpaceOnUse" x1="2146" x2="2404" y1="0" y2="0"><stop offset="0.0000" stop-color="#440154"/><stop offset="0.0155" stop-color="#414487"/><stop offset="0.5969" stop-color="#355f8d"/></linearGradient>
<linearGradient id="g138" gradientUnits="userSpaceOnUse" x1="1767" x2="2404" y1="0" y2="0"><stop offset="0.0000" stop-color="#440154"/><stop offset="0.0518" stop-color="#472a7a"/><stop offset="0.1303" stop-color="#355f8d"/><stop offset="0.3030" stop-color="#2a788e"/><stop offset="0.5071" stop-color="#21918c"/><stop offset="0.5856" stop-color="#26ad81"/><stop offset="0.7206" stop-color="#7ad151"/><stop offset="0.8210" stop-color="#cae11f"/></linearGradient>
<linearGradient id="g139" gradientUnits="userSpaceOnUse" x1="1772" x2="2404" y1="0" y2="0"><stop offset="0.0000" stop-color="#440154"/><stop offset="0.0934" stop-color="#414487"/><stop offset="0.2975" stop-color="#2f6c8e"/><stop offset="0.5348" stop-color="#25848e"/><stop offset="0.7563" stop-color="#1e9c89"/><stop offset="0.9620" stop-color="#26ad81"/></linearGradient>
<linearGradient id="g140" gradientUnits="userSpaceOnUse" x1="2040" x2="2404" y1="0" y2="0"><stop offset="0.0000" stop-color="#440154"/><stop offset="0.3571" stop-color="#414487"/></linearGradient>
<linearGradient id="g141" gradientUnits="userSpaceOnUse" x1="2066" x2="2404" y1="0" y2="0"><stop offset="0.0000" stop-color="#440154"/><stop offset="0.1006" stop-color="#463480"/><stop offset="0.6923" stop-color="#3e4989"/></linearGradient>
<linearGradient id="g142" gradientUnits="userSpaceOnUse" x1="1564" x2="2404" y1="0" y2="0"><stop offset="0.0000" stop-color="#440154"/><stop offset="0.0429" stop-color="#463480"/><stop offset="0.4595" stop-color="#414487"/><stop offset="0.8762" stop-color="#355f8d"/></linearGradient>
<linearGradient id="g143" gradientUnits="userSpaceOnUse" x1="2190" x2="2404" y1="0" y2="0"><stop offset="0.0000" stop-color="#440154"/><stop offset="0.2804" stop-color="#481d6f"/><stop offset="0.9579" stop-color="#481d6f"/><stop offset="0.9626" stop-color="#414487"/></linearGradient>
<linearGradient id="g144" gradientUnits="userSpaceOnUse" x1="1464" x2="2404" y1="0" y2="0"><stop offset="0.0000" stop-color="#440154"/><stop offset="0.0511" stop-color="#414487"/><stop offset="0.2383" stop-color="#355f8d"/><stop offset="0.5170" stop-color="#2f6c8e"/><stop offset="0.7830" stop-color="#228b8d"/></linearGradient>
<linearGradient id="g145" gradientUnits="userSpaceOnUse" x1="1688" x2="2404" y1="0" y2="0"><stop offset="0.0000" stop-color="#440154"/><stop offset="0.0866" stop-color="#463480"/><stop offset="0.3212" stop-color="#355f8d"/><stop offset="0.4385" stop-color="#25848e"/><stop offset="0.7151" stop-color="#1f958b"/></linearGradient>
<linearGradient id="g146" gradientUnits="userSpaceOnUse" x1="1688" x2="2404" y1="0" y2="0"><stop offset="0.0000" stop-color="#440154"/><stop offset="0.0866" stop-color="#463480"/><stop offset="0.3212" stop-color="#355f8d"/><stop offset="0.4385" stop-color="#2a788e"/><stop offset="0.6592" stop-color="#1e9c89"/><stop offset="0.7849" stop-color="#22a884"/><stop offset="0.8897" stop-color="#3bbb75"/><stop offset="0.9344" stop-color="#6ece58"/><stop offset="0.9665" stop-color="#9bd93c"/><stop offset="0.9721" stop-color="#dfe318"/></linearGradient>
<linearGradient id="g147" gradientUnits="userSpaceOnUse" x1="1508" x2="2404" y1="0" y2="0"><stop offset="0.0000" stop-color="#3b528b"/><stop offset="0.4933" stop-color="#355f8d"/><stop offset="0.6607" stop-color="#21918c"/><stop offset="0.8281" stop-color="#22a884"/><stop offset="0.9118" stop-color="#2fb47c"/><stop offset="0.9475" stop-color="#5ec962"/><stop offset="0.9844" stop-color="#7ad151"/></linearGradient>
<linearGradient id="g148" gradientUnits="userSpaceOnUse" x1="2100" x2="2404" y1="0" y2="0"><stop offset="0.0000" stop-color="#440154"/><stop offset="0.3289" stop-color="#463480"/><stop offset="0.6579" stop-color="#3b528b"/><stop offset="0.6908" stop-color="#31678e"/></linearGradient>
<linearGradient id="g149" gradientUnits="userSpaceOnUse" x1="1974" x2="2404" y1="0" y2="0"><stop offset="0.0000" stop-color="#440154"/><stop offset="0.0605" stop-color="#481d6f"/><stop offset="0.7581" stop-color="#2f6c8e"/></linearGradient>
<linearGradient id="g150" gradientUnits="userSpaceOnUse" x1="1984" x2="2404" y1="0" y2="0"><stop offset="0.0000" stop-color="#440154"/><stop offset="0.2238" stop-color="#414487"/><stop offset="0.7524" stop-color="#2f6c8e"/><stop offset="0.9667" stop-color="#2c738e"/></linearGradient>
<linearGradient id="g151" gradientUnits="userSpaceOnUse" x1="1725" x2="2404" y1="0" y2="0"><stop offset="0.0000" stop-color="#440154"/><stop offset="0.0692" stop-color="#414487"/><stop offset="0.3314" stop-color="#2a788e"/><stop offset="0.6112" stop-color="#1e9c89"/><stop offset="0.7378" stop-color="#7ad151"/><stop offset="0.8321" stop-color="#d2e21b"/></linearGradient>
<linearGradient id="g152" gradientUnits="userSpaceOnUse" x1="1621" x2="2404" y1="0" y2="0"><stop offset="0.0000" stop-color="#440154"/><stop offset="0.1328" stop-color="#463480"/><stop offset="0.1928" stop-color="#355f8d"/><stop offset="0.2963" stop-color="#25848e"/><stop offset="0.5402" stop-color="#1e9c89"/><stop offset="0.6628" stop-color="#2fb47c"/><stop offset="0.7778" stop-color="#7ad151"/><stop offset="0.8467" stop-color="#7ad151"/><stop offset="0.8493" stop-color="#9bd93c"/></linearGradient>
<linearGradient id="g153" gradientUnits="userSpaceOnUse" x1="1621" x2="2404" y1="0" y2="0"><stop offset="0.0000" stop-color="#440154"/><stop offset="0.1328" stop-color="#463480"/><stop offset="0.1928" stop-color="#355f8d"/><stop offset="0.2963" stop-color="#287d8e"/><stop offset="0.5402" stop-color="#21918c"/><stop offset="0.6628" stop-color="#1e9c89"/><stop offset="0.7778" stop-color="#22a884"/><stop offset="0.8493" stop-color="#26ad81"/><stop offset="0.8519" stop-color="#69cd5b"/></linearGradient>
<linearGradient id="g154" gradientUnits="userSpaceOnUse" x1="1853" x2="2404" y1="0" y2="0"><stop offset="0.0000" stop-color="#440154"/><stop offset="0.0853" stop-color="#472a7a"/><stop offset="0.3394" stop-color="#38588c"/></linearGradient>
<linearGradient id="g155" gradientUnits="userSpaceOnUse" x1="1970" x2="2404" y1="0" y2="0"><stop offset="0.0000" stop-color="#440154"/><stop offset="0.0691" stop-color="#472a7a"/><stop offset="0.5300" stop-color="#414487"/></linearGradient>
<linearGradient id="g156" gradientUnits="userSpaceOnUse" x1="2060" x2="2404" y1="0" y2="0"><stop offset="0.0000" stop-color="#440154"/><stop offset="0.1163" stop-color="#481d6f"/></linearGradient>
<linearGradient id="g157" gradientUnits="userSpaceOnUse" x1="2198" x2="2286" y1="0" y2="0"><stop offset="0.0000" stop-color="#440154"/><stop offset="0.2955" stop-color="#414487"/></linearGradient>
<linearGradient id="g158" gradientUnits="userSpaceOnUse" x1="2170" x2="2404" y1="0" y2="0"><stop offset="0.0000" stop-color="#440154"/><stop offset="0.1282" stop-color="#414487"/><stop offset="0.6838" stop-color="#2a788e"/></linearGradient>
<linearGradient id="g159" gradientUnits="userSpaceOnUse" x1="2356" x2="2404" y1="0" y2="0"><stop offset="0.0000" stop-color="#440154"/><stop offset="0.7083" stop-color="#3b528b"/></linearGradient>
<linearGradient id="g160" gradientUnits="userSpaceOnUse" x1="2090" x2="2404" y1="0" y2="0"><stop offset="0.0000" stop-color="#440154"/><stop offset="0.0318" stop-color="#481d6f"/><stop offset="0.6369" stop-color="#463480"/></linearGradient>
</defs>
<rect x="11" y="140" width="2393" height="827.6" fill="#440154"/>
<g clip-path="url(#cp)"><g filter="url(#vb)">
<rect x="830" y="276.23" width="1574.0" height="3.5" fill="url(#g0)"/>
<rect x="736" y="283.17" width="1668.0" height="3.5" fill="url(#g1)"/>
<rect x="900" y="286.65" width="1504.0" height="3.5" fill="url(#g2)"/>
<rect x="736" y="293.6" width="1668.0" height="3.5" fill="url(#g3)"/>
<rect x="896" y="304.02" width="1508.0" height="3.5" fill="url(#g4)"/>
<rect x="1300" y="310.98" width="1104.0" height="3.5" fill="url(#g5)"/>
<rect x="1220" y="314.45" width="1184.0" height="3.5" fill="url(#g6)"/>
<rect x="980" y="317.92" width="1424.0" height="10.4" fill="url(#g7)"/>
<rect x="462" y="328.35" width="1942.0" height="3.5" fill="url(#g8)"/>
<rect x="400" y="331.82" width="2004.0" height="3.5" fill="url(#g9)"/>
<rect x="286" y="335.3" width="2118.0" height="6.9" fill="url(#g10)"/>
<rect x="151" y="341.6" width="2253.0" height="4.4" fill="url(#g11)"/>
<rect x="364" y="345.73" width="2040.0" height="3.5" fill="url(#g12)"/>
<rect x="364" y="349.2" width="2040.0" height="3.5" fill="url(#g13)"/>
<rect x="683" y="352.67" width="1721.0" height="3.5" fill="url(#g14)"/>
<rect x="683" y="356.15" width="1721.0" height="7.0" fill="url(#g15)"/>
<rect x="780" y="363.1" width="1624.0" height="6.9" fill="url(#g16)"/>
<rect x="700" y="370.05" width="1704.0" height="3.5" fill="url(#g17)"/>
<rect x="664" y="373.52" width="1740.0" height="3.5" fill="url(#g18)"/>
<rect x="664" y="377.0" width="198.0" height="3.5" fill="url(#g19)"/>
<rect x="568" y="380.48" width="283.0" height="3.5" fill="url(#g20)"/>
<rect x="655" y="394.38" width="195.0" height="3.5" fill="url(#g21)"/>
<rect x="350" y="411.75" width="286.0" height="6.9" fill="url(#g22)"/>
<rect x="230" y="418.7" width="406.0" height="6.9" fill="url(#g23)"/>
<rect x="112" y="425.65" width="501.0" height="7.0" fill="url(#g24)"/>
<rect x="364" y="432.6" width="249.0" height="3.5" fill="url(#g25)"/>
<rect x="308" y="436.07" width="252.0" height="3.5" fill="url(#g26)"/>
<rect x="804" y="429.12" width="45.0" height="3.5" fill="url(#g27)"/>
<rect x="238" y="460.4" width="311.0" height="3.5" fill="url(#g28)"/>
<rect x="462" y="463.88" width="87.0" height="6.9" fill="url(#g29)"/>
<rect x="168" y="474.3" width="73.0" height="3.5" fill="url(#g30)"/>
<rect x="123" y="477.77" width="118.0" height="3.5" fill="url(#g31)"/>
<rect x="364" y="484.73" width="66.0" height="3.5" fill="url(#g32)"/>
<rect x="686" y="460.4" width="14.0" height="3.5" fill="url(#g33)"/>
<rect x="709" y="477.77" width="318.5" height="7.0" fill="url(#g34)"/>
<rect x="737" y="484.73" width="291.0" height="6.9" fill="url(#g35)"/>
<rect x="818" y="491.68" width="218.0" height="10.4" fill="url(#g36)"/>
<rect x="638" y="509.05" width="397.5" height="3.5" fill="url(#g37)"/>
<rect x="985" y="516.0" width="51.0" height="3.5" fill="url(#g38)"/>
<rect x="988" y="519.48" width="63.0" height="3.5" fill="url(#g39)"/>
<rect x="350" y="522.95" width="706.0" height="3.5" fill="url(#g40)"/>
<rect x="350" y="526.42" width="707.7" height="3.5" fill="url(#g41)"/>
<rect x="588" y="529.9" width="469.7" height="3.5" fill="url(#g42)"/>
<rect x="586" y="533.38" width="580.0" height="7.0" fill="url(#g43)"/>
<rect x="442" y="540.33" width="725.0" height="3.5" fill="url(#g44)"/>
<rect x="720" y="543.8" width="447.0" height="3.5" fill="url(#g45)"/>
<rect x="720" y="547.27" width="447.0" height="3.5" fill="url(#g46)"/>
<rect x="874" y="550.75" width="294.0" height="3.5" fill="url(#g47)"/>
<rect x="112" y="536.85" width="11.0" height="3.5" fill="url(#g48)"/>
<rect x="532" y="571.6" width="747.5" height="3.5" fill="url(#g49)"/>
<rect x="179" y="575.08" width="1100.5" height="3.5" fill="url(#g50)"/>
<rect x="179" y="578.55" width="1100.5" height="3.5" fill="url(#g51)"/>
<rect x="179" y="582.02" width="1100.5" height="3.5" fill="url(#g52)"/>
<rect x="286" y="585.5" width="993.5" height="3.5" fill="url(#g53)"/>
<rect x="286" y="588.98" width="1012.0" height="6.9" fill="url(#g54)"/>
<rect x="655" y="595.92" width="643.0" height="3.5" fill="url(#g55)"/>
<rect x="1182" y="599.4" width="131.4" height="3.5" fill="url(#g56)"/>
<rect x="1297" y="602.88" width="16.4" height="3.5" fill="url(#g57)"/>
<rect x="1168" y="557.7" width="102.0" height="3.5" fill="url(#g58)"/>
<rect x="1028" y="564.65" width="245.0" height="3.5" fill="url(#g59)"/>
<rect x="1056" y="568.12" width="219.0" height="3.5" fill="url(#g60)"/>
<rect x="849" y="609.83" width="470.0" height="6.9" fill="url(#g61)"/>
<rect x="1011" y="616.77" width="309.0" height="3.5" fill="url(#g62)"/>
<rect x="1313" y="620.25" width="7.0" height="3.5" fill="url(#g63)"/>
<rect x="1165" y="623.73" width="156.0" height="3.5" fill="url(#g64)"/>
<rect x="1165" y="627.2" width="156.0" height="3.5" fill="url(#g65)"/>
<rect x="706" y="630.67" width="616.0" height="7.0" fill="url(#g66)"/>
<rect x="734" y="637.62" width="588.0" height="3.5" fill="url(#g67)"/>
<rect x="734" y="641.1" width="588.0" height="3.5" fill="url(#g68)"/>
<rect x="1059" y="648.05" width="263.0" height="3.5" fill="url(#g69)"/>
<rect x="1059" y="655.0" width="263.0" height="3.5" fill="url(#g70)"/>
<rect x="1160" y="658.47" width="163.0" height="3.5" fill="url(#g71)"/>
<rect x="1160" y="661.95" width="163.0" height="3.5" fill="url(#g72)"/>
<rect x="496" y="665.42" width="827.0" height="7.0" fill="url(#g73)"/>
<rect x="169" y="672.38" width="1154.5" height="3.5" fill="url(#g74)"/>
<rect x="169" y="675.85" width="1154.5" height="3.5" fill="url(#g75)"/>
<rect x="364" y="679.33" width="959.5" height="3.5" fill="url(#g76)"/>
<rect x="1162" y="682.8" width="162.0" height="3.5" fill="url(#g77)"/>
<rect x="1271" y="700.17" width="54.0" height="3.5" fill="url(#g78)"/>
<rect x="1060" y="397.85" width="1344.0" height="3.5" fill="url(#g79)"/>
<rect x="1271" y="404.8" width="1133.0" height="3.5" fill="url(#g80)"/>
<rect x="1063" y="411.75" width="1341.0" height="6.9" fill="url(#g81)"/>
<rect x="1115" y="422.18" width="1289.0" height="6.9" fill="url(#g82)"/>
<rect x="1115" y="429.12" width="1289.0" height="3.5" fill="url(#g83)"/>
<rect x="1248" y="456.93" width="1156.0" height="6.9" fill="url(#g84)"/>
<rect x="1170" y="463.88" width="1234.0" height="10.4" fill="url(#g85)"/>
<rect x="1168" y="474.3" width="1236.0" height="6.9" fill="url(#g86)"/>
<rect x="1325" y="536.85" width="1079.0" height="3.5" fill="#3e4989"/>
<rect x="1321" y="554.23" width="1083.0" height="3.5" fill="url(#g88)"/>
<rect x="986" y="443.02" width="32.0" height="3.5" fill="url(#g89)"/>
<rect x="1431" y="613.3" width="973.0" height="3.5" fill="url(#g90)"/>
<rect x="2173" y="616.77" width="231.0" height="3.5" fill="url(#g91)"/>
<rect x="1434" y="623.73" width="970.0" height="3.5" fill="url(#g92)"/>
<rect x="2190" y="627.2" width="214.0" height="6.9" fill="url(#g93)"/>
<rect x="1443" y="634.15" width="961.0" height="3.5" fill="url(#g94)"/>
<rect x="1443" y="637.62" width="961.0" height="3.5" fill="url(#g95)"/>
<rect x="1560" y="641.1" width="844.0" height="3.5" fill="url(#g96)"/>
<rect x="1452" y="644.58" width="952.0" height="3.5" fill="url(#g97)"/>
<rect x="1452" y="648.05" width="952.0" height="3.5" fill="url(#g98)"/>
<rect x="1507.8" y="651.52" width="896.2" height="3.5" fill="url(#g99)"/>
<rect x="2250" y="655.0" width="154.0" height="7.0" fill="url(#g100)"/>
<rect x="1403" y="661.95" width="1001.0" height="3.5" fill="url(#g101)"/>
<rect x="1717" y="665.42" width="687.0" height="3.5" fill="url(#g102)"/>
<rect x="1717" y="668.9" width="687.0" height="7.0" fill="url(#g103)"/>
<rect x="1602" y="675.85" width="802.0" height="3.5" fill="url(#g104)"/>
<rect x="1700" y="679.33" width="704.0" height="3.5" fill="url(#g105)"/>
<rect x="1455" y="682.8" width="949.0" height="7.0" fill="url(#g106)"/>
<rect x="1613" y="689.75" width="791.0" height="3.5" fill="url(#g107)"/>
<rect x="1613" y="693.22" width="791.0" height="6.9" fill="url(#g108)"/>
<rect x="1613" y="700.17" width="791.0" height="3.5" fill="url(#g109)"/>
<rect x="1700" y="703.65" width="704.0" height="3.5" fill="url(#g110)"/>
<rect x="1700" y="707.12" width="704.0" height="3.5" fill="url(#g111)"/>
<rect x="1464" y="710.6" width="940.0" height="3.5" fill="url(#g112)"/>
<rect x="1464" y="714.08" width="940.0" height="3.5" fill="url(#g113)"/>
<rect x="1917" y="717.55" width="487.0" height="3.5" fill="url(#g114)"/>
<rect x="1532" y="721.03" width="645.0" height="3.5" fill="url(#g115)"/>
<rect x="1946" y="724.5" width="230.0" height="7.0" fill="url(#g116)"/>
<rect x="1562" y="731.45" width="610.0" height="3.5" fill="url(#g117)"/>
<rect x="1562" y="734.92" width="431.0" height="3.5" fill="url(#g118)"/>
<rect x="1700" y="738.4" width="291.0" height="3.5" fill="url(#g119)"/>
<rect x="1669" y="741.88" width="323.0" height="3.5" fill="url(#g120)"/>
<rect x="2140" y="741.88" width="30.0" height="3.5" fill="url(#g121)"/>
<rect x="2124" y="748.83" width="44.0" height="3.5" fill="url(#g122)"/>
<rect x="2332" y="734.92" width="72.0" height="3.5" fill="url(#g123)"/>
<rect x="2370" y="745.35" width="24.0" height="6.9" fill="url(#g124)"/>
<rect x="1885" y="766.2" width="101.0" height="3.5" fill="url(#g125)"/>
<rect x="1919" y="769.67" width="67.0" height="3.5" fill="url(#g126)"/>
<rect x="1959" y="776.62" width="25.0" height="3.5" fill="url(#g127)"/>
<rect x="1508" y="787.05" width="93.0" height="3.5" fill="url(#g128)"/>
<rect x="1436" y="804.42" width="24.0" height="3.5" fill="url(#g129)"/>
<rect x="1773" y="807.9" width="55.0" height="3.5" fill="url(#g130)"/>
<rect x="1613" y="814.85" width="304.0" height="3.5" fill="url(#g131)"/>
<rect x="1641" y="818.33" width="276.0" height="3.5" fill="url(#g132)"/>
<rect x="1508" y="821.8" width="409.0" height="3.5" fill="url(#g133)"/>
<rect x="1641" y="825.28" width="276.0" height="3.5" fill="url(#g134)"/>
<rect x="1917" y="828.75" width="28.0" height="3.5" fill="url(#g135)"/>
<rect x="1794" y="839.17" width="166.0" height="3.5" fill="url(#g136)"/>
<rect x="2146" y="839.17" width="258.0" height="3.5" fill="url(#g137)"/>
<rect x="1767" y="842.65" width="637.0" height="3.5" fill="url(#g138)"/>
<rect x="1772" y="846.12" width="632.0" height="7.0" fill="url(#g139)"/>
<rect x="2040" y="853.08" width="364.0" height="6.9" fill="url(#g140)"/>
<rect x="2066" y="860.03" width="338.0" height="3.5" fill="url(#g141)"/>
<rect x="1564" y="863.5" width="840.0" height="3.5" fill="url(#g142)"/>
<rect x="2190" y="866.97" width="214.0" height="3.5" fill="url(#g143)"/>
<rect x="1464" y="870.45" width="940.0" height="3.5" fill="url(#g144)"/>
<rect x="1688" y="873.92" width="716.0" height="3.5" fill="url(#g145)"/>
<rect x="1688" y="877.4" width="716.0" height="3.5" fill="url(#g146)"/>
<rect x="1508" y="880.88" width="896.0" height="3.5" fill="url(#g147)"/>
<rect x="2100" y="884.35" width="304.0" height="3.5" fill="url(#g148)"/>
<rect x="1974" y="887.83" width="430.0" height="3.5" fill="url(#g149)"/>
<rect x="1984" y="891.3" width="420.0" height="7.0" fill="url(#g150)"/>
<rect x="1725" y="898.25" width="679.0" height="3.5" fill="url(#g151)"/>
<rect x="1621" y="901.72" width="783.0" height="3.5" fill="url(#g152)"/>
<rect x="1621" y="905.2" width="783.0" height="3.5" fill="url(#g153)"/>
<rect x="1853" y="908.67" width="551.0" height="3.5" fill="url(#g154)"/>
<rect x="1970" y="912.15" width="434.0" height="3.5" fill="url(#g155)"/>
<rect x="2060" y="926.05" width="344.0" height="3.5" fill="url(#g156)"/>
<rect x="2198" y="804.42" width="88.0" height="3.5" fill="url(#g157)"/>
<rect x="2170" y="814.85" width="234.0" height="3.5" fill="url(#g158)"/>
<rect x="2356" y="818.33" width="48.0" height="6.9" fill="url(#g159)"/>
<rect x="2090" y="832.22" width="314.0" height="3.5" fill="url(#g160)"/>
</g>
<path d="M12.7 451.4V459.3M13.8 458.0V459.5M16.0 458.5V460.5M17.1 458.7V465.1M19.3 459.6V464.1M22.6 459.4V461.6M24.8 457.8V462.5M27.1 456.6V464.0M32.6 452.8V461.0M33.7 456.1V462.0M34.8 456.8V459.4M35.9 458.3V463.8M38.1 457.0V460.1M39.3 459.0V462.1M40.4 460.6V466.2M41.5 464.7V471.2M47.0 464.9V469.2M49.2 461.0V468.9M51.4 465.4V472.6M53.7 467.6V474.3M58.1 455.0V462.2M60.3 447.8V455.0M66.9 444.4V449.7M68.1 438.5V450.9M69.2 445.6V458.1M70.3 448.8V471.9M71.4 463.8V489.6M72.5 485.4V497.0M73.6 492.4V509.7M74.7 500.8V511.9M75.8 509.2V512.1M82.5 502.8V506.9M83.6 498.9V513.5M84.7 508.2V513.2M86.9 508.7V514.4M96.9 500.9V507.6M99.1 504.9V509.0M100.2 506.3V511.6M105.7 503.7V508.7M110.2 502.0V510.8M114.6 504.1V510.1M115.7 507.0V511.3M116.8 507.5V513.6M117.9 509.4V512.2M119.0 512.0V516.1M124.6 489.6V517.8M125.7 490.5V536.8M126.8 525.7V540.4M127.9 538.8V549.8M129.0 543.9V555.1M131.2 544.9V546.3M135.6 538.3V542.3M136.7 540.1V547.0M144.5 531.0V538.4M146.7 531.1V535.5M151.1 499.0V505.5M152.3 499.1V514.9M153.4 509.4V542.8M154.5 523.6V556.2M161.1 537.0V547.3M167.8 505.9V510.3M172.2 499.7V501.8M173.3 497.7V507.7M177.7 495.3V498.1M178.8 494.1V501.2M180.0 498.5V506.5M184.4 489.5V494.6M186.6 491.3V498.5M188.8 494.1V498.5M189.9 497.4V498.7M193.2 495.3V499.5M196.6 496.6V499.7M202.1 494.8V501.6M203.2 498.5V502.5M205.4 496.1V500.8M206.5 497.9V499.4M207.6 498.0V501.2M209.9 495.3V499.5M212.1 497.1V501.2M213.2 500.0V502.8M216.5 497.6V501.3M217.6 498.2V503.3M222.0 492.9V497.3M225.4 490.3V495.3M226.5 492.0V495.5M227.6 490.5V497.3M228.7 492.3V501.8M229.8 498.7V504.9M232.0 499.3V501.6M244.2 481.1V484.6M249.7 475.1V480.7M252.0 473.6V482.6M256.4 468.5V474.3M257.5 469.4V485.9M259.7 476.7V483.8M260.8 481.0V493.4M261.9 484.6V494.0M263.0 491.8V497.4M268.6 482.9V490.1M269.7 484.2V495.0M270.8 483.7V492.7M271.9 491.0V498.3M273.0 493.5V501.5M274.1 498.2V499.8M275.2 495.6V502.0M276.3 497.7V505.2M277.4 497.1V504.7M280.8 499.1V510.8M281.9 503.7V513.1M283.0 505.4V520.2M290.7 501.2V504.1M293.0 498.7V502.8M294.1 498.9V509.9M296.3 500.4V510.8M297.4 503.7V510.8M298.5 508.1V511.5M299.6 505.6V512.4M300.7 509.9V513.2M301.8 512.5V515.5M304.0 509.8V514.8M305.1 510.5V516.6M307.4 510.9V514.3M308.5 512.3V515.9M311.8 510.3V513.6M315.1 508.4V511.2M317.3 504.5V507.4M318.4 504.2V508.9M319.5 501.5V508.9M324.0 501.7V511.7M326.2 504.2V511.8M327.3 509.9V514.3M329.5 510.7V514.3M331.7 508.3V517.0M336.2 507.0V515.3M340.6 501.9V508.0M342.8 503.7V515.3M343.9 510.1V515.2M345.0 512.6V521.3M346.1 516.4V521.5M351.7 497.5V502.1M355.0 496.2V502.4M357.2 496.4V503.0M358.3 499.4V501.1M361.6 492.7V500.3M362.7 498.1V513.9M363.9 510.0V524.7M366.1 512.6V515.0M371.6 510.7V512.1M372.7 511.0V512.5M376.0 509.3V512.8M377.2 510.1V514.4M379.4 512.2V515.3M382.7 509.1V517.6M384.9 511.7V519.0M388.2 506.9V513.6M389.3 512.6V514.5M390.4 511.3V515.1M393.8 508.4V514.4M396.0 507.7V511.7M399.3 505.4V509.1M401.5 502.9V512.3M403.7 505.9V513.3M406.0 505.5V510.1M409.3 506.8V510.9M412.6 507.7V513.3M414.8 506.6V510.7M415.9 505.1V511.4M418.1 505.7V512.9M419.3 506.9V512.1M420.4 511.4V513.3M421.5 511.8V515.8M432.5 478.9V482.0M433.7 476.3V483.6M434.8 480.2V484.3M435.9 480.6V490.2M437.0 482.0V500.5M438.1 494.9V497.7M439.2 495.8V502.9M440.3 500.9V509.0M441.4 504.8V515.7M442.5 508.7V514.1M444.7 509.9V515.4M450.3 510.0V516.4M454.7 507.0V510.9M455.8 509.1V513.2M466.9 494.6V496.4M468.0 494.8V496.1M470.2 491.2V496.1M471.3 493.5V497.8M472.4 490.5V504.8M473.5 497.1V503.2M475.8 495.5V499.9M476.9 497.2V502.0M478.0 497.8V503.8M480.2 500.5V506.1M482.4 496.0V503.3M484.6 496.6V505.6M485.7 500.3V504.0M487.9 499.8V501.9M490.2 497.1V505.6M495.7 491.9V495.6M497.9 493.2V497.2M499.0 495.4V500.3M501.2 495.3V498.7M502.3 496.9V500.3M503.4 497.8V503.0M506.8 492.5V500.0M510.1 497.0V500.9M513.4 496.4V500.1M517.9 494.0V496.9M519.0 494.9V498.0M520.1 497.2V498.9M523.4 492.1V497.2M525.6 492.8V500.4M532.3 487.5V493.6M533.4 490.7V496.7M540.0 481.0V486.9M546.7 476.0V479.4M552.2 452.3V456.3M553.3 454.1V460.6M554.4 457.3V459.1M558.8 450.7V454.6M561.1 449.0V456.5M563.3 451.2V458.6M564.4 453.4V463.5M565.5 459.4V461.2M566.6 459.5V467.1M567.7 465.3V469.4M568.8 463.7V471.0M571.0 462.4V468.1M573.2 462.2V466.0M574.4 459.1V467.7M576.6 459.7V463.3M581.0 456.6V461.0M583.2 453.5V461.1M586.5 446.0V454.9M588.8 448.3V451.6M591.0 446.6V451.7M592.1 446.6V450.6M594.3 447.5V452.5M595.4 446.4V454.8M598.7 447.9V454.1M599.8 449.8V462.1M603.2 451.2V455.9M604.3 451.0V455.8M606.5 450.2V455.3M615.3 431.2V436.8M616.5 435.8V437.5M617.6 432.3V443.3M618.7 442.1V446.7M619.8 444.0V451.5M626.4 440.9V448.2M627.5 436.9V446.9M628.6 442.7V448.8M637.5 418.5V423.1M638.6 419.7V428.3M639.7 420.5V429.5M641.9 425.8V431.1M644.1 427.5V430.4M646.4 425.4V431.1M650.8 422.0V426.0M651.9 418.3V425.5M656.3 406.8V413.7M657.4 411.3V424.9M658.6 423.5V433.7M665.2 408.0V412.3M666.3 408.7V414.0M668.5 408.0V416.6M669.6 411.7V416.8M670.7 413.9V415.5M673.0 412.8V418.7M674.1 415.1V433.5M675.2 412.1V428.1M676.3 422.2V428.4M677.4 423.5V433.9M680.7 424.0V433.9M681.8 425.3V438.6M682.9 434.7V443.6M684.0 435.7V447.4M685.1 444.4V453.9M686.2 448.7V453.3M687.4 450.5V460.4M695.1 438.9V442.4M696.2 440.2V447.7M697.3 443.5V452.4M698.4 448.4V454.6M699.5 446.7V458.9M700.6 453.6V461.6M701.8 455.8V469.7M706.2 455.2V461.0M707.3 460.3V469.7M708.4 465.2V472.2M713.9 450.0V455.8M715.1 453.3V459.6M716.2 456.6V459.9M717.3 457.6V461.1M719.5 457.1V462.6M723.9 456.2V460.0M725.0 458.1V462.8M727.2 457.5V462.1M728.3 455.6V462.6M729.5 459.3V461.3M730.6 460.6V464.6M731.7 462.4V466.4M732.8 462.6V480.9M738.3 454.3V459.9M739.4 456.8V461.4M740.5 459.1V470.4M741.6 462.9V476.2M746.1 464.2V470.2M748.3 465.1V471.7M750.5 465.5V469.2M752.7 464.7V470.6M753.8 465.6V468.8M756.0 462.9V466.7M757.2 464.1V467.0M760.5 459.1V468.8M761.6 463.2V464.7M762.7 463.0V465.1M763.8 461.2V470.9M766.0 463.1V467.9M767.1 463.0V471.1M768.2 468.0V470.7M771.6 466.0V472.8M772.7 468.7V472.9M776.0 463.0V469.9M781.5 460.3V464.6M782.6 456.9V463.1M786.0 456.3V459.2M789.3 455.4V462.0M791.5 454.0V458.5M792.6 454.6V460.5M793.7 457.7V462.9M795.9 457.5V460.1M797.0 458.4V459.8M803.7 444.9V447.9M804.8 446.0V451.6M805.9 448.4V453.9M808.1 442.4V456.2M809.2 452.6V462.7M810.3 458.5V464.4M811.4 461.3V462.8M812.5 460.5V470.1M818.1 452.2V457.6M819.2 453.2V460.4M820.3 455.2V462.3M822.5 455.1V465.8M826.9 458.9V464.0M831.4 455.7V458.9M836.9 451.4V458.2M841.3 447.2V451.2M844.7 437.6V445.6M846.9 434.5V436.9M852.4 380.9V396.6M853.5 384.0V389.9M854.6 387.3V395.6M855.8 384.8V397.7M856.9 390.0V394.4M859.1 389.1V400.8M861.3 395.6V399.2M862.4 394.3V403.5M863.5 397.9V406.4M864.6 395.6V409.9M865.7 399.2V411.5M871.3 375.3V383.1M872.4 376.7V385.0M873.5 384.9V392.6M877.9 381.6V392.9M879.0 388.6V394.7M880.1 391.7V408.9M881.2 395.4V401.5M882.3 400.4V407.2M894.5 376.6V388.0M895.6 378.2V392.7M896.7 389.5V403.8M897.9 400.4V410.3M900.1 402.2V407.8M902.3 402.3V404.7M905.6 401.0V402.2M906.7 400.8V403.3M907.8 400.7V408.7M908.9 406.3V410.4M913.4 402.4V407.1M916.7 400.6V407.8M918.9 401.0V410.3M920.0 408.9V411.6M921.1 408.4V415.9M922.2 412.8V420.8M930.0 407.5V411.1M931.1 405.1V409.4M933.3 404.9V410.2M936.6 401.0V407.4M938.8 405.8V416.9M941.1 402.5V406.2M943.3 402.3V405.6M945.5 399.1V406.4M948.8 399.7V406.0M951.0 396.6V403.1M953.2 397.0V402.4M954.4 397.2V404.2M956.6 400.2V404.0M957.7 400.5V403.8M958.8 402.0V405.7M961.0 401.7V404.2M962.1 402.7V405.8M966.5 396.8V401.3M967.6 398.3V406.0M976.5 389.3V393.9M978.7 387.1V392.5M980.9 388.1V391.1M983.2 382.8V393.2M985.4 388.5V434.8M986.5 424.5V443.1M988.7 433.8V440.9M989.8 433.8V437.2M992.0 431.1V434.3M994.2 431.1V434.6M999.8 427.8V431.5M1002.0 427.0V431.1M1004.2 427.3V433.9M1006.4 423.1V431.0M1008.6 426.3V433.1M1009.7 428.6V436.6M1010.9 433.8V445.9M1013.1 436.3V439.9M1014.2 435.2V441.6M1017.5 436.3V448.8M1018.6 441.5V460.9M1019.7 452.6V461.6M1021.9 454.2V464.8M1023.0 463.2V464.7M1026.4 459.3V467.8M1027.5 465.8V472.9M1028.6 471.5V483.1M1029.7 476.2V487.0M1030.8 470.6V497.0M1033.0 489.6V493.8M1035.2 482.2V492.2M1036.3 489.9V506.2M1037.4 497.7V520.3M1044.1 493.8V496.6M1045.2 494.4V500.0M1047.4 495.6V504.0M1048.5 499.0V504.2M1049.6 501.4V509.8M1050.7 497.7V505.8M1051.8 504.3V513.6M1053.0 510.0V517.5M1056.3 491.6V510.5M1057.4 506.9V529.3M1061.8 464.7V484.9M1062.9 475.3V487.5M1065.1 480.5V486.2M1067.4 480.3V483.8M1068.5 481.8V486.6M1069.6 483.2V486.8M1070.7 479.6V487.7M1071.8 486.4V489.0M1072.9 483.7V490.8M1074.0 483.0V491.5M1075.1 483.3V494.1M1076.2 476.3V496.9M1077.3 492.2V494.1M1078.4 491.0V498.3M1080.6 482.6V505.7M1081.8 502.3V510.3M1082.9 509.9V513.7M1092.8 498.1V504.3M1095.1 497.7V503.7M1097.3 497.1V505.3M1098.4 500.8V509.7M1099.5 503.5V508.4M1100.6 497.6V516.6M1101.7 507.9V517.1M1103.9 513.1V519.8M1105.0 514.1V517.5M1106.1 515.2V527.3M1111.7 488.8V500.5M1112.8 496.3V500.5M1113.9 498.2V509.1M1116.1 502.5V507.6M1118.3 504.1V507.6M1119.4 505.3V513.7M1121.6 501.8V509.7M1123.9 499.9V505.6M1127.2 500.4V508.7M1129.4 502.7V504.4M1131.6 497.5V506.4M1133.8 499.3V508.9M1137.2 498.1V504.1M1139.4 500.4V505.7M1141.6 501.4V503.9M1142.7 502.4V506.1M1144.9 503.3V505.9M1146.0 503.4V508.0M1147.1 507.0V508.6M1148.2 505.5V508.4M1150.4 506.3V511.3M1151.6 507.2V508.6M1153.8 507.1V508.7M1156.0 506.5V510.0M1157.1 509.1V513.8M1159.3 506.7V513.1M1160.4 509.2V517.1M1161.5 510.9V518.7M1162.6 510.6V521.5M1163.7 513.4V532.4M1164.8 517.3V535.3M1166.0 524.9V545.0M1167.1 540.9V550.0M1168.2 549.9V552.6M1174.8 521.1V533.5M1175.9 530.0V539.0M1181.5 511.7V518.3M1182.6 516.8V526.1M1183.7 519.5V526.4M1189.2 509.9V514.3M1190.3 513.1V517.0M1191.4 514.8V519.9M1197.0 509.4V517.4M1202.5 500.6V512.7M1203.6 510.0V513.2M1204.7 509.1V513.7M1205.8 513.4V518.1M1206.9 514.0V521.6M1208.1 514.2V522.0M1209.2 514.2V523.2M1211.4 517.0V520.0M1214.7 512.6V519.9M1222.5 483.7V487.8M1223.6 482.5V488.5M1224.7 485.4V490.4M1226.9 481.0V488.8M1228.0 487.1V490.4M1229.1 488.4V495.5M1230.2 490.3V493.1M1231.3 492.0V495.9M1233.5 488.3V492.9M1235.8 486.3V488.9M1239.1 477.9V485.5M1240.2 478.7V489.7M1241.3 486.2V490.6M1242.4 488.0V494.5M1245.7 483.5V488.6M1247.9 483.6V485.5M1249.0 482.9V488.4M1250.2 484.9V487.2M1251.3 486.6V490.8M1252.4 489.3V492.8M1253.5 486.6V503.6M1254.6 499.6V510.1M1257.9 504.2V508.1M1260.1 502.8V508.5M1261.2 503.9V510.1M1264.6 503.2V512.6M1266.8 503.2V529.0M1267.9 511.2V532.5M1269.0 528.8V550.2M1270.1 532.8V553.0M1271.2 548.5V560.8M1276.7 545.5V549.7M1277.8 542.6V570.3M1279.0 565.6V583.4M1280.1 582.1V587.2M1284.5 559.4V565.7M1285.6 565.2V569.1M1286.7 566.9V570.6M1287.8 568.9V574.3M1292.3 560.8V564.2M1293.4 561.7V567.4M1294.5 567.2V575.0M1295.6 562.3V576.7M1296.7 571.7V579.9M1297.8 576.3V593.9M1301.1 562.8V577.9M1302.2 573.8V583.3M1307.8 572.5V579.9M1310.0 575.8V580.0M1311.1 576.1V586.1M1312.2 579.4V582.0M1313.3 581.5V590.8M1314.4 590.0V602.7M1316.6 591.7V599.6M1318.8 592.9V602.4M1319.9 593.9V610.6M1321.1 603.9V628.8M1322.2 621.5V644.8M1323.3 637.8V657.2M1324.4 656.2V716.2M1328.8 645.7V658.8M1331.0 645.1V648.0M1332.1 643.4V653.9M1334.4 644.9V652.6M1335.5 647.9V650.9M1336.6 650.0V653.9M1337.7 648.4V657.2M1338.8 652.2V666.1M1341.0 650.4V661.9M1343.2 656.3V687.8M1344.3 657.6V666.3M1345.4 661.7V679.8M1346.5 669.9V682.4M1347.6 681.2V691.4M1348.8 689.8V698.6M1353.2 677.7V684.4M1354.3 681.9V690.2M1355.4 685.5V697.0M1356.5 689.5V705.8M1357.6 699.1V716.2M1358.7 706.7V721.7M1359.8 710.8V728.3M1360.9 714.6V733.7M1363.2 726.3V735.2M1376.5 669.0V678.9M1377.6 674.5V681.3M1378.7 673.2V684.4M1379.8 680.3V688.1M1386.4 675.0V683.8M1387.5 680.8V685.1M1388.6 679.2V684.2M1389.7 677.5V690.6M1392.0 686.3V691.2M1393.1 687.7V697.1M1394.2 693.7V700.8M1395.3 692.4V707.2M1399.7 695.2V701.4M1400.8 694.4V702.1M1401.9 694.0V719.6M1403.0 705.7V737.9M1404.1 731.7V750.4M1407.5 681.4V697.9M1408.6 691.5V715.1M1409.7 708.1V713.1M1413.0 705.6V708.5M1418.5 695.4V704.7M1420.8 701.5V703.0M1421.9 701.6V708.9M1423.0 705.7V715.4M1424.1 703.9V721.5M1425.2 713.3V721.1M1426.3 700.0V728.5M1427.4 719.6V737.0M1428.5 732.5V747.7M1429.6 733.9V750.8M1433.0 730.4V733.6M1434.1 727.0V735.5M1435.2 730.5V747.3M1436.3 743.1V750.3M1440.7 735.4V752.1M1441.8 744.6V749.6M1442.9 749.0V755.1M1444.0 751.6V757.1M1448.5 734.1V747.1M1449.6 743.0V751.2M1450.7 749.2V753.9M1451.8 749.1V759.3M1452.9 751.2V759.0M1454.0 758.3V776.1M1455.1 765.3V782.3M1456.2 773.2V788.6M1457.3 782.3V797.7M1458.4 787.1V804.7M1459.5 801.5V815.3M1460.6 808.1V819.3M1461.8 809.4V826.3M1462.9 824.9V841.8M1464.0 837.6V855.6M1470.6 788.8V799.4M1471.7 797.0V806.3M1472.8 804.8V816.0M1483.9 758.7V765.6M1487.2 756.1V759.6M1488.3 755.6V760.3M1489.5 757.1V764.4M1490.6 759.6V764.4M1496.1 752.0V766.0M1497.2 756.8V767.2M1498.3 764.0V776.9M1499.4 771.4V786.6M1503.9 773.9V779.2M1506.1 768.2V772.9M1511.6 750.5V757.2M1512.7 751.7V755.0M1513.8 751.0V756.5M1516.0 750.1V760.4M1517.1 756.3V761.1M1519.4 754.5V761.3M1520.5 757.1V761.3M1522.7 759.9V762.9M1531.6 741.5V744.6M1532.7 738.3V746.3M1533.8 744.9V752.3M1534.9 742.8V751.9M1536.0 750.2V759.1M1542.6 745.9V751.6M1543.7 748.1V757.8M1544.8 753.0V762.1M1546.0 755.4V766.1M1549.3 752.2V760.1M1551.5 753.3V765.8M1552.6 752.1V769.0M1553.7 760.6V765.4M1554.8 758.5V773.7M1555.9 758.8V777.6M1557.0 769.6V778.6M1567.0 736.8V744.6M1568.1 741.9V749.4M1569.2 742.3V745.8M1570.3 743.7V747.6M1571.4 746.0V751.2M1572.5 748.2V752.6M1573.7 746.1V757.3M1574.8 753.7V763.5M1575.9 755.5V769.6M1577.0 765.6V776.1M1578.1 771.8V782.8M1585.8 772.4V777.9M1589.2 769.5V774.7M1590.3 768.0V778.0M1591.4 775.0V779.2M1592.5 777.1V789.8M1595.8 774.4V778.2M1599.1 775.1V782.9M1600.2 770.4V787.2M1601.3 781.2V790.3M1602.5 786.9V795.4M1603.6 789.6V797.9M1604.7 788.3V798.0M1605.8 792.0V797.1M1606.9 793.0V798.5M1613.5 781.9V790.9M1614.6 790.0V813.0M1620.2 786.0V795.0M1621.3 790.8V794.2M1623.5 786.9V794.7M1624.6 789.4V793.8M1626.8 787.5V793.0M1627.9 788.7V792.5M1630.2 787.4V791.8M1635.7 780.3V790.2M1639.0 778.7V786.7M1640.1 785.6V801.5M1641.2 797.5V808.5M1642.3 804.7V809.9M1643.4 805.2V811.2M1647.9 798.6V803.7M1650.1 791.2V799.4M1651.2 796.4V801.9M1653.4 795.1V799.1M1654.5 795.8V799.3M1656.7 795.4V800.1M1660.1 789.0V797.6M1668.9 760.0V768.8M1670.0 763.7V767.4M1671.1 761.5V766.3M1672.3 763.5V766.7M1674.5 763.4V769.2M1675.6 765.8V772.9M1677.8 765.8V768.0M1680.0 765.7V768.0M1683.3 763.4V765.9M1687.8 746.3V757.9M1690.0 753.8V758.7M1691.1 753.8V757.4M1692.2 755.8V761.3M1693.3 760.0V763.3M1698.8 753.7V756.8M1701.1 753.0V759.2M1702.2 755.3V761.4M1703.3 757.8V763.9M1704.4 759.5V767.6M1705.5 766.4V769.2M1706.6 767.0V773.3M1712.1 748.9V757.5M1713.2 753.9V759.4M1714.4 757.0V763.0M1715.5 759.4V764.9M1716.6 761.4V769.6M1717.7 767.0V779.5M1718.8 774.3V779.6M1721.0 770.1V782.5M1722.1 776.2V789.7M1723.2 787.4V796.1M1724.3 788.4V803.8M1729.9 789.4V792.9M1732.1 789.3V795.1M1733.2 789.5V792.4M1735.4 790.1V793.2M1737.6 790.1V795.3M1743.2 780.5V785.8M1745.4 772.5V786.6M1746.5 784.9V796.8M1747.6 787.1V797.7M1756.4 778.7V780.6M1757.6 778.2V780.0M1758.7 777.8V783.7M1759.8 777.9V784.7M1762.0 780.8V785.2M1763.1 781.6V784.4M1764.2 781.3V791.0M1765.3 785.5V787.5M1766.4 784.4V792.7M1767.5 788.1V791.3M1769.7 788.4V796.2M1770.9 791.6V796.5M1778.6 776.7V780.8M1780.8 777.9V782.6M1781.9 778.7V785.0M1783.0 783.5V788.4M1785.3 781.3V790.9M1790.8 775.2V781.2M1794.1 771.5V785.1M1795.2 778.9V787.3M1796.3 780.6V790.0M1800.8 775.4V789.3M1801.9 788.2V792.9M1803.0 791.5V796.7M1804.1 794.3V802.8M1805.2 798.3V802.9M1808.5 794.6V802.1M1814.1 788.0V792.3M1817.4 785.0V789.4M1819.6 784.4V794.3M1820.7 788.6V794.8M1821.8 789.1V797.2M1822.9 790.7V801.7M1825.1 796.0V804.5M1826.2 801.9V806.8M1829.6 798.5V805.1M1831.8 795.9V802.5M1835.1 790.7V796.4M1837.3 792.8V796.6M1840.6 792.0V794.6M1841.8 791.0V797.2M1844.0 788.0V793.0M1846.2 784.0V792.9M1847.3 789.4V792.0M1848.4 788.2V795.2M1849.5 793.0V802.0M1850.6 793.7V800.2M1856.2 783.6V793.9M1858.4 786.9V791.1M1859.5 787.3V791.2M1860.6 789.6V792.0M1861.7 791.0V793.3M1863.9 785.6V793.4M1865.0 790.6V794.9M1869.5 790.2V791.8M1872.8 785.2V789.2M1876.1 782.4V791.3M1880.5 782.8V787.2M1883.9 782.6V789.1M1886.1 786.1V789.2M1888.3 782.7V791.3M1889.4 788.6V794.2M1894.9 785.4V791.4M1896.0 784.6V789.4M1898.3 785.9V788.1M1899.4 785.7V789.1M1900.5 783.7V791.2M1902.7 786.7V793.4M1904.9 783.5V799.5M1906.0 791.8V797.1M1908.2 790.1V801.6M1912.7 791.6V798.5M1916.0 791.2V800.2M1917.1 796.1V818.1M1918.2 807.0V826.7M1921.5 818.5V824.1M1928.2 801.0V807.7M1930.4 797.1V805.3M1931.5 802.2V806.7M1932.6 804.1V816.7M1933.7 809.6V815.6M1934.8 799.3V818.2M1935.9 807.7V822.4M1937.0 818.1V826.0M1940.4 818.5V821.3M1941.5 819.8V823.4M1942.6 818.1V823.3M1944.8 817.9V832.9M1945.9 828.1V835.2M1947.0 828.9V834.2M1950.3 831.5V833.9M1952.5 829.7V837.5M1954.8 828.8V832.1M1955.9 831.8V837.3M1957.0 832.8V840.0M1958.1 837.1V840.8M1962.5 814.0V826.9M1963.6 823.0V826.5M1965.8 821.1V825.5M1968.1 814.4V824.4M1973.6 791.9V808.0M1974.7 804.4V812.7M1975.8 806.3V816.9M1993.5 744.2V747.9M1994.6 744.5V765.8M1995.7 762.6V767.8M2001.3 758.8V762.1M2003.5 758.5V763.5M2004.6 758.8V764.4M2005.7 753.7V763.6M2009.0 753.6V764.2M2010.2 760.6V776.1M2011.3 765.2V766.5M2012.4 761.5V776.8M2013.5 767.2V780.4M2014.6 779.3V783.2M2015.7 780.2V785.9M2021.2 770.2V776.7M2022.3 767.9V776.8M2023.4 774.2V778.8M2027.9 765.8V771.2M2029.0 766.9V771.6M2031.2 766.3V773.4M2032.3 768.4V771.5M2033.4 766.4V785.4M2034.5 777.6V786.6M2035.6 783.1V794.1M2036.7 789.7V798.4M2037.8 776.3V797.7M2039.0 793.0V804.8M2040.1 794.9V801.3M2041.2 795.4V804.1M2044.5 799.7V804.6M2045.6 802.9V806.6M2047.8 798.3V805.3M2050.0 798.5V803.5M2051.1 800.4V803.3M2052.3 799.3V808.4M2054.5 800.1V808.5M2055.6 804.0V819.5M2056.7 814.1V824.9M2057.8 822.0V829.4M2060.0 820.7V822.0M2064.4 809.5V819.4M2079.9 769.3V781.5M2081.1 775.0V781.3M2082.2 776.8V786.8M2084.4 779.2V785.9M2085.5 784.4V786.6M2086.6 779.8V789.8M2087.7 784.2V790.6M2092.1 771.7V781.0M2093.2 776.0V789.7M2094.4 781.2V792.1M2095.5 789.9V793.9M2096.6 788.0V795.9M2097.7 789.1V802.8M2098.8 801.8V807.4M2104.3 787.7V791.0M2106.5 786.1V790.0M2107.6 785.0V792.9M2108.8 789.6V794.4M2109.9 793.7V797.8M2111.0 796.7V803.7M2114.3 792.8V804.4M2115.4 791.9V801.4M2117.6 796.3V803.3M2120.9 755.0V763.2M2122.0 762.3V774.8M2123.2 762.6V775.1M2124.3 766.8V775.6M2126.5 767.0V769.8M2128.7 768.2V773.6M2129.8 767.0V776.6M2130.9 770.6V779.3M2132.0 769.8V776.1M2133.1 774.8V782.8M2135.3 778.9V798.2M2136.4 783.2V788.8M2137.6 781.2V791.3M2138.7 782.4V792.4M2139.8 791.7V799.6M2143.1 789.2V795.8M2144.2 787.9V799.1M2145.3 796.3V801.0M2148.6 776.1V786.7M2150.9 783.2V792.4M2152.0 785.9V793.1M2153.1 787.6V792.7M2156.4 782.3V787.5M2157.5 786.4V791.9M2158.6 789.5V798.7M2159.7 791.4V797.2M2167.5 749.6V761.6M2168.6 755.4V770.4M2177.4 723.4V731.0M2178.5 725.4V736.8M2179.7 733.2V737.3M2180.8 735.5V745.5M2181.9 738.3V741.2M2183.0 738.8V748.8M2185.2 743.2V747.0M2189.6 741.9V751.1M2190.7 743.3V752.0M2195.2 737.5V741.7M2196.3 735.6V745.0M2197.4 740.9V749.5M2198.5 739.6V748.2M2199.6 745.4V760.4M2200.7 754.7V767.9M2204.0 757.8V764.6M2206.2 752.8V759.1M2208.5 756.3V757.9M2209.6 756.2V760.5M2212.9 753.6V760.2M2215.1 755.6V757.5M2216.2 756.4V763.7M2219.5 756.8V766.7M2220.6 759.0V769.3M2221.8 753.8V771.3M2222.9 763.6V775.0M2224.0 773.9V785.7M2225.1 781.0V789.3M2226.2 789.0V792.6M2227.3 788.1V791.5M2232.8 780.6V791.4M2235.0 784.1V787.7M2237.3 785.5V792.0M2238.4 785.8V789.8M2240.6 785.2V786.7M2241.7 783.9V791.2M2243.9 784.7V788.8M2245.0 783.7V789.3M2246.1 786.6V788.5M2247.2 786.4V788.6M2249.5 782.1V789.2M2252.8 784.6V788.9M2253.9 785.9V790.0M2255.0 787.1V793.9M2256.1 785.8V792.7M2257.2 790.5V796.4M2260.5 788.8V793.4M2262.7 791.0V796.2M2263.9 788.4V795.3M2265.0 794.2V797.7M2266.1 796.3V799.7M2268.3 794.7V798.6M2271.6 791.3V799.5M2273.8 787.4V795.3M2274.9 792.4V800.5M2276.0 794.3V806.2M2277.1 799.9V807.0M2278.3 797.6V804.2M2284.9 791.6V798.9M2286.0 789.6V803.3M2287.1 802.8V807.5M2296.0 779.9V786.9M2297.1 784.3V791.4M2303.7 776.2V777.6M2306.0 772.7V781.0M2309.3 770.4V772.9M2310.4 771.6V773.6M2311.5 770.2V776.7M2312.6 769.4V781.1M2313.7 777.5V783.3M2324.8 761.1V765.7M2327.0 763.1V766.7M2328.1 764.7V767.0M2329.2 764.9V773.5M2330.3 766.8V775.5M2333.7 760.2V763.9M2335.9 759.3V766.4M2337.0 760.8V770.6M2338.1 767.5V774.6M2339.2 770.5V778.3M2340.3 772.1V775.7M2342.5 771.9V773.4M2344.7 767.0V772.1M2346.9 769.3V774.7M2348.1 771.9V778.6M2349.2 773.5V777.8M2360.2 758.6V765.8M2361.3 759.2V761.2M2363.6 758.0V763.2M2366.9 757.3V763.5M2369.1 757.3V771.1M2370.2 763.5V774.2M2372.4 768.6V775.5M2376.9 767.6V773.6M2380.2 758.4V768.1M2385.7 755.7V764.7M2386.8 762.5V769.3M2389.0 763.0V770.3M2392.4 764.4V771.0M2396.8 741.3V749.0M2397.9 740.0V749.1M2399.0 746.5V749.9M2400.1 742.4V753.7M2401.2 749.5V754.6M2402.3 749.3V752.7M2403.4 750.2V757.3M124 483V500M155 540V557M1325 680V723M1404.7 700V748M1058 500V528M1280 560V588" stroke="#ff0000" stroke-width="1.6" fill="none"/>
<path d="M11.6 455.7V459.4M14.9 454.7V462.9M18.2 458.9V461.9M20.4 460.1V462.5M21.5 456.0V461.3M23.7 455.9V461.8M26.0 454.9V464.7M28.2 452.3V462.0M29.3 456.5V457.7M30.4 453.7V459.9M31.5 454.3V457.9M37.0 455.2V463.9M42.6 468.0V473.0M43.7 467.9V469.6M44.8 466.2V471.3M45.9 466.8V468.8M48.1 463.6V469.1M50.3 465.3V473.5M52.5 463.1V473.5M54.8 468.1V476.0M55.9 462.6V471.0M57.0 453.0V470.4M59.2 451.2V458.0M61.4 448.6V453.7M62.5 444.4V452.5M63.6 445.1V447.4M64.7 442.8V446.7M65.8 440.2V447.4M76.9 505.9V512.6M78.0 506.2V512.0M79.1 507.5V514.6M80.2 507.2V510.9M81.3 504.0V511.5M85.8 508.0V515.3M88.0 510.2V516.1M89.1 505.8V511.5M90.2 506.6V509.6M91.3 506.7V509.0M92.4 506.0V508.6M93.5 504.1V509.6M94.6 505.1V506.9M95.8 502.7V508.8M98.0 500.8V509.1M101.3 506.9V513.3M102.4 505.0V510.6M103.5 504.2V507.9M104.6 500.9V509.2M106.8 502.6V507.9M107.9 501.3V506.5M109.0 499.0V506.3M111.3 505.1V508.2M112.4 501.6V507.3M113.5 503.0V507.7M120.1 508.4V516.3M121.2 500.8V509.2M122.3 493.6V502.6M123.4 487.4V501.7M130.1 544.3V559.4M132.3 541.0V549.5M133.4 542.6V545.6M134.5 538.6V545.3M137.9 540.0V546.4M139.0 536.0V544.0M140.1 538.5V543.5M141.2 538.7V540.1M142.3 535.6V539.4M143.4 531.4V537.8M145.6 521.3V543.0M147.8 518.5V536.6M148.9 502.7V527.0M150.0 499.6V505.3M155.6 548.5V553.1M156.7 541.1V551.4M157.8 539.2V547.7M158.9 539.1V543.1M160.0 535.3V543.9M162.2 538.8V548.3M163.3 527.6V546.2M164.4 513.2V529.9M165.5 505.6V531.8M166.7 505.0V512.6M168.9 503.6V510.4M170.0 500.3V505.6M171.1 494.3V503.7M174.4 495.4V513.2M175.5 494.1V499.1M176.6 495.3V497.9M181.1 499.6V504.9M182.2 495.1V501.2M183.3 490.5V496.7M185.5 492.2V494.6M187.7 496.2V499.1M191.0 495.3V499.6M192.1 492.1V501.1M194.4 495.1V500.1M195.5 495.8V498.0M197.7 494.9V499.3M198.8 496.5V498.4M199.9 497.5V499.6M201.0 493.6V498.0M204.3 494.6V499.8M208.8 495.2V499.8M211.0 495.4V502.2M214.3 496.0V502.2M215.4 495.2V500.2M218.7 492.9V504.1M219.8 497.6V502.4M220.9 493.9V500.5M223.2 492.5V496.0M224.3 492.0V497.4M230.9 500.5V506.1M233.1 499.5V504.6M234.2 495.9V506.4M235.3 497.4V499.3M236.5 496.5V500.0M237.6 494.2V498.5M238.7 484.4V496.0M239.8 482.2V492.1M240.9 479.0V490.9M242.0 479.1V482.7M243.1 479.4V483.6M245.3 482.6V485.0M246.4 476.1V484.7M247.5 479.3V481.0M248.6 477.1V481.7M250.9 474.3V481.7M253.1 474.3V478.4M254.2 469.4V476.5M255.3 469.6V472.6M258.6 477.4V483.7M264.1 490.9V496.9M265.3 492.5V497.2M266.4 488.2V494.7M267.5 484.0V493.8M278.6 499.4V508.1M279.7 500.2V506.4M284.1 511.2V518.2M285.2 510.6V513.5M286.3 510.5V512.0M287.4 502.9V511.4M288.5 499.7V510.3M289.6 502.3V507.4M291.8 497.2V504.6M295.2 502.6V508.0M302.9 508.7V514.8M306.2 511.0V516.0M309.6 509.7V515.9M310.7 508.6V515.2M312.9 507.7V513.7M314.0 508.7V511.9M316.2 502.2V511.9M320.6 504.1V507.6M321.8 504.8V506.5M322.9 504.0V510.2M325.1 507.3V516.0M328.4 509.8V512.4M330.6 510.7V515.7M332.8 510.4V516.0M333.9 509.9V515.2M335.1 505.3V514.1M337.3 501.1V511.2M338.4 501.3V506.1M339.5 502.7V506.3M341.7 503.7V509.4M347.2 513.5V522.6M348.3 507.3V519.3M349.5 504.3V510.5M350.6 498.8V510.3M352.8 490.4V500.7M353.9 493.3V499.1M356.1 495.6V503.2M359.4 497.1V501.3M360.5 497.2V502.4M365.0 512.4V517.8M367.2 509.2V519.5M368.3 511.0V513.3M369.4 511.4V516.8M370.5 508.4V513.9M373.8 510.8V512.4M374.9 509.6V512.1M378.3 511.7V517.8M380.5 511.4V516.7M381.6 509.5V513.8M383.8 509.7V514.3M386.0 509.7V514.8M387.1 507.9V512.8M391.6 511.1V517.0M392.7 509.4V519.9M394.9 508.3V513.0M397.1 506.6V510.1M398.2 505.8V509.6M400.4 505.7V507.8M402.6 506.3V511.5M404.8 505.0V517.7M407.1 509.1V514.4M408.2 506.1V510.0M410.4 509.3V510.9M411.5 508.6V514.4M413.7 505.5V510.2M417.0 506.3V508.8M422.6 511.6V519.0M423.7 504.9V517.1M424.8 502.9V510.3M425.9 500.0V505.0M427.0 495.0V501.6M428.1 491.8V498.4M429.2 485.9V495.8M430.3 482.4V489.6M431.4 479.8V483.5M443.6 510.4V516.0M445.8 508.7V516.4M446.9 508.8V515.8M448.1 509.7V516.3M449.2 509.6V515.2M451.4 511.3V514.0M452.5 511.1V513.4M453.6 506.8V521.2M456.9 509.0V512.7M458.0 503.2V510.5M459.1 503.9V507.9M460.2 503.5V506.4M461.3 499.1V505.1M462.5 495.5V503.2M463.6 495.7V501.5M464.7 494.7V497.7M465.8 494.1V499.2M469.1 490.5V496.8M474.6 496.9V502.3M479.1 500.4V507.9M481.3 494.8V505.4M483.5 499.4V503.1M486.8 497.4V502.1M489.0 495.1V501.9M491.3 496.3V502.3M492.4 494.9V499.3M493.5 493.5V496.9M494.6 485.6V495.4M496.8 491.1V497.3M500.1 497.1V499.0M504.6 498.3V501.5M505.7 493.5V499.2M507.9 496.7V501.5M509.0 497.2V499.4M511.2 497.7V500.1M512.3 496.1V499.6M514.5 497.3V500.0M515.6 497.8V499.4M516.7 491.4V500.5M521.2 492.5V499.6M522.3 494.3V496.7M524.5 494.4V496.6M526.7 493.0V499.4M527.8 495.5V497.6M528.9 494.4V497.7M530.0 492.1V498.0M531.1 491.6V493.3M534.5 488.7V498.8M535.6 489.4V491.6M536.7 488.8V490.7M537.8 485.8V490.5M538.9 479.6V491.5M541.1 478.9V486.0M542.2 478.3V482.4M543.3 474.1V486.5M544.4 474.9V479.5M545.5 474.9V480.7M547.8 468.1V478.3M548.9 458.2V475.3M550.0 454.2V466.9M551.1 451.2V460.2M555.5 453.3V458.8M556.6 453.2V460.5M557.7 449.7V457.5M559.9 451.4V456.6M562.2 454.0V458.5M569.9 461.4V468.8M572.1 460.9V465.6M575.5 459.1V467.5M577.7 460.2V462.9M578.8 459.7V463.8M579.9 456.4V462.4M582.1 455.1V460.1M584.3 453.7V458.0M585.4 448.7V461.0M587.6 447.9V454.8M589.9 446.6V453.3M593.2 446.6V451.8M596.5 449.2V453.6M597.6 448.1V454.0M600.9 451.1V460.0M602.0 449.7V455.8M605.4 453.3V456.5M607.6 451.3V454.7M608.7 449.7V453.6M609.8 445.5V471.1M610.9 441.8V451.7M612.0 440.2V448.4M613.1 437.4V445.2M614.2 430.0V443.3M620.9 446.5V449.5M622.0 444.6V450.7M623.1 444.5V447.4M624.2 443.2V447.0M625.3 440.7V446.2M629.7 434.5V449.7M630.9 429.3V440.3M632.0 425.7V436.8M633.1 424.2V431.5M634.2 419.4V430.1M635.3 422.6V423.9M636.4 417.9V424.4M640.8 425.3V432.6M643.0 427.4V432.1M645.3 426.2V429.6M647.5 420.5V429.6M648.6 421.1V427.5M649.7 419.5V426.0M653.0 419.3V427.6M654.1 412.8V423.4M655.2 406.9V420.0M659.7 425.7V436.1M660.8 420.8V430.9M661.9 414.4V421.8M663.0 409.3V415.5M664.1 400.6V411.5M667.4 409.0V412.1M671.8 414.0V420.4M678.5 426.2V433.5M679.6 426.5V433.0M688.5 447.6V454.9M689.6 448.8V453.3M690.7 448.3V450.6M691.8 442.0V450.8M692.9 440.1V447.0M694.0 438.8V442.5M702.9 459.2V472.8M704.0 456.4V462.5M705.1 456.8V462.6M709.5 467.0V471.8M710.6 461.4V470.2M711.7 454.1V464.2M712.8 448.1V458.8M718.4 457.8V462.1M720.6 457.8V462.5M721.7 457.4V461.1M722.8 455.3V464.3M726.1 457.9V461.2M733.9 462.8V469.9M735.0 462.1V467.6M736.1 458.0V467.6M737.2 454.3V460.8M742.7 466.2V470.4M743.9 468.0V469.7M745.0 465.6V468.9M747.2 465.5V469.0M749.4 466.5V470.0M751.6 464.9V468.7M754.9 462.9V471.7M758.3 462.7V476.9M759.4 458.9V465.5M764.9 463.8V468.7M769.3 467.1V470.4M770.4 465.0V472.2M773.8 464.9V471.6M774.9 461.4V467.9M777.1 463.5V469.6M778.2 464.9V468.5M779.3 462.4V466.6M780.4 457.5V464.7M783.7 457.6V463.0M784.8 454.6V465.6M787.1 458.4V461.4M788.2 457.3V460.4M790.4 453.8V459.3M794.8 456.1V465.2M798.1 455.3V460.3M799.2 451.6V457.7M800.4 442.9V456.8M801.5 441.3V450.6M802.6 442.7V448.4M807.0 446.4V451.4M813.7 465.0V470.6M814.8 462.2V468.9M815.9 454.5V467.4M817.0 450.6V460.8M821.4 457.1V462.2M823.6 459.1V466.8M824.7 458.8V464.0M825.8 460.5V463.0M828.1 460.1V463.3M829.2 454.9V461.9M830.3 454.2V460.2M832.5 455.5V461.1M833.6 450.8V457.7M834.7 451.2V455.8M835.8 449.3V456.2M838.0 452.6V456.0M839.1 448.3V454.2M840.2 448.8V452.4M842.5 445.0V453.4M843.6 432.9V449.7M845.8 434.6V445.2M848.0 423.1V439.4M849.1 401.3V433.6M850.2 380.0V408.3M851.3 381.4V387.5M858.0 391.7V393.6M860.2 394.7V399.3M866.8 399.8V410.4M867.9 391.4V407.2M869.0 384.7V397.8M870.2 373.6V386.7M874.6 386.8V393.7M875.7 384.4V390.2M876.8 381.0V386.5M883.4 402.2V408.2M884.6 400.6V404.0M885.7 394.8V406.9M886.8 393.5V398.2M887.9 389.6V396.6M889.0 385.0V394.5M890.1 388.1V393.7M891.2 382.7V394.0M892.3 382.3V389.2M893.4 381.5V387.2M899.0 404.2V410.9M901.2 400.5V407.4M903.4 399.1V404.0M904.5 400.3V405.1M910.0 405.9V408.3M911.1 403.3V406.8M912.3 401.5V409.5M914.5 403.9V409.0M915.6 400.8V404.4M917.8 401.1V408.5M923.3 413.4V417.1M924.4 412.5V414.3M925.5 410.6V415.0M926.7 409.5V414.2M927.8 406.1V410.8M928.9 402.5V412.8M932.2 404.3V409.9M934.4 406.5V411.2M935.5 402.1V409.2M937.7 405.6V409.5M939.9 399.5V412.4M942.2 401.7V406.3M944.4 402.8V406.2M946.6 401.7V404.2M947.7 400.3V402.5M949.9 397.4V403.9M952.1 394.6V401.1M955.5 393.1V405.9M959.9 399.9V405.0M963.2 400.3V405.2M964.3 400.0V405.4M965.4 398.5V403.8M968.8 400.6V402.4M969.9 395.2V404.2M971.0 393.2V400.2M972.1 394.8V397.4M973.2 391.9V396.2M974.3 393.5V395.3M975.4 387.6V395.8M977.6 387.4V393.0M979.8 385.5V393.5M982.0 387.0V394.6M984.3 385.4V394.2M987.6 431.9V442.1M990.9 432.8V440.6M993.1 431.4V436.9M995.3 430.9V435.5M996.5 425.8V432.2M997.6 428.9V430.8M998.7 426.5V431.4M1000.9 428.9V433.1M1003.1 429.0V430.8M1005.3 425.4V432.0M1007.5 428.1V433.2M1012.0 435.1V444.6M1015.3 431.7V444.4M1016.4 436.9V440.9M1020.8 456.5V462.2M1024.1 461.7V465.2M1025.3 459.1V470.3M1031.9 491.6V494.2M1034.1 480.4V501.9M1038.5 506.9V517.6M1039.7 501.1V512.1M1040.8 498.4V508.4M1041.9 497.9V504.2M1043.0 494.1V500.8M1046.3 493.6V501.7M1054.1 509.6V520.4M1055.2 491.8V512.5M1058.5 497.1V540.3M1059.6 471.8V506.5M1060.7 472.0V476.9M1064.0 481.9V489.2M1066.2 478.4V491.3M1079.5 486.0V496.1M1084.0 509.4V515.1M1085.1 505.9V512.5M1086.2 508.9V510.3M1087.3 506.5V513.0M1088.4 503.4V508.4M1089.5 498.9V507.1M1090.6 502.7V505.8M1091.7 497.7V504.3M1093.9 499.6V502.9M1096.2 497.5V501.9M1102.8 512.4V515.3M1107.2 511.2V519.6M1108.3 501.2V519.2M1109.5 499.8V511.0M1110.6 490.5V501.2M1115.0 503.8V507.3M1117.2 504.6V508.7M1120.5 498.9V509.1M1122.7 498.8V508.8M1125.0 502.2V516.6M1126.1 501.8V505.3M1128.3 502.7V509.1M1130.5 496.9V504.7M1132.7 501.9V506.2M1134.9 501.8V506.6M1136.0 497.9V503.0M1138.3 501.9V503.8M1140.5 502.2V503.8M1143.8 500.0V509.8M1149.3 505.5V510.6M1152.7 506.6V510.1M1154.9 506.2V508.2M1158.2 507.4V513.7M1169.3 542.0V551.8M1170.4 541.5V546.4M1171.5 537.0V545.9M1172.6 529.5V540.5M1173.7 528.1V534.7M1177.0 526.1V534.3M1178.1 526.3V530.9M1179.2 517.4V527.2M1180.4 516.9V521.3M1184.8 519.2V523.6M1185.9 518.7V525.6M1187.0 512.4V523.7M1188.1 511.1V517.2M1192.5 516.8V521.8M1193.7 513.2V521.0M1194.8 512.2V516.6M1195.9 513.6V517.8M1198.1 510.8V516.7M1199.2 506.2V512.1M1200.3 508.9V513.6M1201.4 506.4V510.6M1210.3 514.6V525.5M1212.5 514.6V519.9M1213.6 506.8V518.6M1215.8 510.3V520.9M1216.9 506.7V515.0M1218.0 501.2V509.0M1219.1 492.4V508.7M1220.2 486.7V496.3M1221.3 482.0V498.4M1225.8 483.4V492.4M1232.4 487.9V496.6M1234.6 482.3V490.3M1236.9 481.8V487.3M1238.0 478.9V483.3M1243.5 491.2V493.7M1244.6 485.7V492.1M1246.8 482.4V488.1M1255.7 502.3V511.2M1256.8 503.8V509.8M1259.0 503.1V507.2M1262.3 501.4V510.6M1263.4 504.4V508.6M1265.7 507.7V517.7M1272.3 555.0V559.5M1273.4 541.3V560.0M1274.5 548.1V556.4M1275.6 543.4V550.0M1281.2 577.0V592.4M1282.3 564.2V581.5M1283.4 561.3V570.8M1288.9 566.9V571.8M1290.0 565.4V571.6M1291.1 560.5V565.9M1298.9 580.3V591.6M1300.0 565.5V584.0M1303.3 575.2V583.9M1304.4 572.1V578.4M1305.5 575.1V578.1M1306.7 573.3V577.7M1308.9 576.4V578.8M1315.5 592.2V604.3M1317.7 594.8V605.1M1325.5 688.3V714.3M1326.6 657.5V691.3M1327.7 652.9V663.2M1329.9 639.9V660.9M1333.2 646.2V648.4M1339.9 653.4V659.0M1342.1 658.2V664.2M1349.9 686.6V695.1M1351.0 681.0V690.1M1352.1 680.4V683.9M1362.0 727.4V732.2M1364.3 730.5V739.4M1365.4 719.8V742.4M1366.5 706.2V724.1M1367.6 696.9V710.0M1368.7 687.9V707.1M1369.8 689.0V693.8M1370.9 674.8V691.0M1372.0 675.7V681.8M1373.1 672.7V682.1M1374.2 669.6V680.5M1375.3 671.1V673.5M1380.9 684.4V690.5M1382.0 683.5V688.8M1383.1 679.7V685.6M1384.2 677.5V683.4M1385.3 678.2V680.1M1390.9 685.7V691.0M1396.4 701.4V703.3M1397.5 695.5V703.4M1398.6 695.2V702.0M1405.3 710.9V749.0M1406.4 679.9V715.5M1410.8 711.2V716.2M1411.9 704.3V712.3M1414.1 703.1V708.6M1415.2 697.8V707.5M1416.3 698.0V705.4M1417.4 699.2V704.4M1419.7 690.7V706.2M1430.7 744.5V750.9M1431.8 728.7V747.2M1437.4 740.7V751.2M1438.5 736.4V743.6M1439.6 735.5V741.5M1445.1 753.8V756.7M1446.2 743.8V756.0M1447.4 732.5V746.9M1465.1 825.3V859.0M1466.2 809.0V826.6M1467.3 797.9V817.1M1468.4 798.3V805.5M1469.5 790.6V800.2M1473.9 812.7V815.3M1475.1 809.7V814.6M1476.2 802.5V810.7M1477.3 794.8V812.4M1478.4 793.5V803.7M1479.5 783.8V795.2M1480.6 773.6V789.0M1481.7 770.7V786.0M1482.8 757.4V772.6M1485.0 757.6V765.0M1486.1 757.2V765.7M1491.7 762.4V764.2M1492.8 759.9V767.0M1493.9 753.5V761.8M1495.0 751.0V758.9M1500.5 770.8V784.7M1501.6 770.7V784.5M1502.7 772.7V778.2M1505.0 769.6V778.2M1507.2 765.9V775.9M1508.3 756.6V773.7M1509.4 751.2V760.9M1510.5 748.6V756.5M1514.9 753.8V755.4M1518.3 755.0V760.7M1521.6 759.5V761.9M1523.8 756.3V761.8M1524.9 756.5V762.0M1526.0 750.6V757.7M1527.1 750.3V752.7M1528.2 744.5V755.0M1529.3 739.8V749.6M1530.4 739.7V746.8M1537.1 753.6V761.2M1538.2 750.9V762.4M1539.3 751.5V754.4M1540.4 749.9V754.7M1541.5 746.2V752.0M1547.1 759.2V762.7M1548.2 752.8V759.4M1550.4 751.9V763.7M1558.1 771.1V779.4M1559.2 769.9V772.9M1560.4 762.9V774.6M1561.5 749.1V765.9M1562.6 753.0V762.2M1563.7 743.8V757.2M1564.8 743.2V752.8M1565.9 740.2V745.1M1579.2 781.0V786.8M1580.3 778.5V782.3M1581.4 776.2V779.7M1582.5 773.3V777.0M1583.6 770.4V777.2M1584.7 773.4V781.1M1586.9 774.3V779.9M1588.1 770.9V777.1M1593.6 776.7V783.4M1594.7 775.7V778.5M1596.9 774.1V781.4M1598.0 774.7V783.6M1608.0 795.9V801.7M1609.1 793.1V797.3M1610.2 789.0V800.8M1611.3 786.6V795.4M1612.4 779.1V788.1M1615.8 802.9V808.4M1616.9 800.2V804.9M1618.0 792.5V802.2M1619.1 788.9V795.8M1622.4 787.7V793.0M1625.7 785.2V794.6M1629.0 786.8V791.9M1631.3 787.5V791.1M1632.4 788.2V789.9M1633.5 786.7V791.6M1634.6 783.1V789.5M1636.8 777.5V788.9M1637.9 781.0V784.6M1644.6 804.1V811.4M1645.7 804.1V806.6M1646.8 800.2V805.7M1649.0 794.3V806.1M1652.3 796.5V802.1M1655.6 796.4V800.8M1657.8 795.7V800.6M1659.0 792.7V797.9M1661.2 790.5V795.4M1662.3 791.7V798.0M1663.4 790.3V794.1M1664.5 780.9V802.8M1665.6 774.9V791.0M1666.7 771.6V786.7M1667.8 759.3V775.5M1673.4 764.8V768.0M1676.7 763.4V770.0M1678.9 760.1V774.2M1681.1 762.9V770.4M1682.2 762.0V766.3M1684.4 761.0V768.6M1685.5 755.7V766.4M1686.7 751.4V762.2M1688.9 750.9V760.5M1694.4 759.3V763.8M1695.5 757.6V760.4M1696.6 753.5V760.3M1697.7 755.1V763.1M1699.9 753.9V756.9M1707.7 763.1V769.3M1708.8 759.9V767.5M1709.9 754.8V763.6M1711.0 750.0V762.0M1719.9 771.2V785.7M1725.4 797.4V802.0M1726.5 794.5V802.4M1727.6 791.0V799.5M1728.8 789.5V796.2M1731.0 789.4V796.4M1734.3 788.3V792.8M1736.5 786.2V793.6M1738.7 787.9V796.1M1739.8 782.0V795.1M1740.9 781.8V791.5M1742.0 778.1V786.7M1744.3 776.6V788.5M1748.7 793.9V795.8M1749.8 789.7V795.7M1750.9 780.7V794.1M1752.0 786.5V788.2M1753.1 782.7V788.1M1754.2 781.8V786.2M1755.3 778.8V784.7M1760.9 779.7V783.4M1768.6 786.8V792.6M1772.0 794.2V799.7M1773.1 795.1V796.9M1774.2 788.0V796.4M1775.3 786.3V793.2M1776.4 779.5V792.9M1777.5 775.5V786.8M1779.7 777.9V783.7M1784.1 782.1V785.8M1786.4 779.8V790.5M1787.5 780.5V789.4M1788.6 775.8V794.8M1789.7 774.7V779.1M1791.9 773.2V779.9M1793.0 773.3V778.6M1797.4 784.4V790.6M1798.5 781.4V791.5M1799.7 779.7V786.1M1806.3 797.4V804.4M1807.4 795.0V799.2M1809.6 794.4V801.6M1810.7 789.2V795.4M1811.8 789.4V793.4M1813.0 777.6V794.3M1815.2 787.4V791.0M1816.3 781.9V789.2M1818.5 787.5V789.7M1824.0 797.3V802.1M1827.4 801.3V806.9M1828.5 802.2V807.3M1830.7 792.1V807.7M1832.9 789.9V802.2M1834.0 792.8V799.7M1836.2 786.4V796.8M1838.4 790.0V795.8M1839.5 787.8V799.3M1842.9 790.8V795.8M1845.1 788.3V795.4M1851.7 798.0V802.2M1852.8 791.0V798.8M1853.9 790.1V796.7M1855.1 786.7V790.9M1857.3 784.4V797.7M1862.8 789.4V792.4M1866.1 791.8V794.6M1867.2 787.5V793.6M1868.3 789.5V793.3M1870.6 788.6V793.7M1871.7 785.0V790.4M1873.9 786.9V789.2M1875.0 783.1V790.7M1877.2 784.0V789.4M1878.3 782.6V790.4M1879.4 784.7V787.2M1881.6 780.1V786.8M1882.7 782.8V785.3M1885.0 785.5V787.5M1887.2 784.4V789.9M1890.5 787.2V792.9M1891.6 789.2V792.2M1892.7 787.7V790.0M1893.8 786.2V789.6M1897.1 786.7V790.7M1901.6 783.8V793.1M1903.8 786.3V791.6M1907.1 790.4V796.9M1909.3 794.5V801.1M1910.4 796.8V801.0M1911.6 796.1V798.2M1913.8 787.7V796.4M1914.9 793.8V805.5M1919.3 820.4V825.0M1920.4 816.1V822.8M1922.6 816.5V826.6M1923.7 805.4V819.2M1924.8 811.6V815.4M1926.0 808.4V815.8M1927.1 802.0V811.5M1929.3 801.5V806.7M1938.1 816.3V824.6M1939.2 817.8V821.5M1943.7 820.6V825.4M1948.1 830.0V834.0M1949.2 831.0V832.3M1951.4 830.1V833.6M1953.7 830.3V833.9M1959.2 829.6V840.4M1960.3 823.4V833.4M1961.4 816.1V826.3M1964.7 822.6V827.3M1966.9 818.6V824.1M1969.2 819.1V828.6M1970.3 811.8V822.4M1971.4 801.7V815.4M1972.5 800.9V806.6M1976.9 809.5V817.5M1978.0 807.4V816.0M1979.1 802.4V813.4M1980.2 800.6V808.4M1981.3 800.2V811.0M1982.5 797.6V810.6M1983.6 792.0V802.2M1984.7 784.4V802.2M1985.8 781.4V792.4M1986.9 766.5V784.3M1988.0 764.0V778.3M1989.1 763.9V773.7M1990.2 760.1V766.4M1991.3 748.9V766.7M1992.4 743.0V752.2M1996.9 764.1V769.5M1998.0 761.3V766.7M1999.1 757.9V765.5M2000.2 757.5V762.9M2002.4 758.3V761.1M2006.8 759.2V762.2M2007.9 757.7V761.9M2016.8 780.3V784.6M2017.9 773.5V782.2M2019.0 772.5V776.9M2020.1 770.8V775.2M2024.6 774.9V778.5M2025.7 768.1V779.3M2026.8 764.9V772.6M2030.1 765.4V774.5M2042.3 802.9V807.1M2043.4 800.2V805.3M2046.7 800.7V804.2M2048.9 799.2V805.6M2053.4 800.3V804.1M2058.9 820.9V826.0M2061.1 819.7V826.0M2062.2 815.3V822.4M2063.3 810.4V820.5M2065.5 809.2V818.1M2066.7 808.1V813.7M2067.8 801.5V811.0M2068.9 801.5V816.0M2070.0 800.3V811.7M2071.1 796.9V802.3M2072.2 795.1V801.3M2073.3 792.9V800.2M2074.4 792.2V803.8M2075.5 787.4V803.4M2076.6 777.3V793.3M2077.7 772.8V780.6M2078.8 764.5V774.6M2083.3 777.0V784.8M2088.8 778.5V787.9M2089.9 777.8V782.3M2091.0 776.6V782.2M2099.9 800.6V807.8M2101.0 789.1V806.1M2102.1 793.0V796.6M2103.2 786.5V795.7M2105.4 784.8V791.1M2112.1 797.6V807.1M2113.2 795.9V800.7M2116.5 793.6V800.5M2118.7 778.4V806.7M2119.8 754.8V781.3M2125.4 767.5V779.4M2127.6 767.8V773.0M2134.2 778.7V785.7M2140.9 790.2V798.4M2142.0 788.4V794.2M2146.4 792.6V801.6M2147.5 778.4V794.6M2149.7 780.7V786.6M2154.2 784.6V791.5M2155.3 779.9V789.1M2160.8 788.1V796.9M2161.9 788.3V794.0M2163.0 787.9V793.3M2164.1 777.0V794.5M2165.3 759.2V782.4M2166.4 748.4V762.2M2169.7 765.7V773.8M2170.8 750.9V773.0M2171.9 738.3V760.7M2173.0 733.0V748.7M2174.1 730.8V737.7M2175.2 725.4V738.4M2176.3 724.9V729.5M2184.1 741.4V749.1M2186.3 743.0V745.1M2187.4 743.2V744.6M2188.5 742.2V748.5M2191.8 745.5V752.1M2193.0 739.1V748.6M2194.1 736.5V742.0M2201.8 758.4V763.2M2202.9 758.5V761.4M2205.1 753.2V760.8M2207.4 754.3V761.7M2210.7 756.4V758.6M2211.8 755.0V763.3M2214.0 754.7V759.9M2217.3 752.7V762.9M2218.4 756.9V760.7M2228.4 787.6V793.8M2229.5 787.8V794.1M2230.6 785.8V792.2M2231.7 781.6V787.8M2233.9 785.3V790.3M2236.2 784.5V791.5M2239.5 785.7V788.8M2242.8 784.3V788.7M2248.3 783.1V788.4M2250.6 786.1V789.3M2251.7 785.9V788.4M2258.3 791.2V798.3M2259.4 787.9V795.1M2261.6 790.0V796.6M2267.2 793.6V801.7M2269.4 791.6V798.9M2270.5 791.8V798.3M2272.7 785.8V794.4M2279.4 801.0V805.7M2280.5 798.2V802.9M2281.6 794.8V802.8M2282.7 795.8V801.9M2283.8 791.2V797.4M2288.2 796.6V806.7M2289.3 793.8V801.3M2290.4 788.7V797.8M2291.6 790.8V796.6M2292.7 784.1V793.2M2293.8 781.0V788.1M2294.9 779.8V783.8M2298.2 784.7V790.8M2299.3 781.7V786.6M2300.4 780.7V783.8M2301.5 774.7V782.7M2302.6 775.0V779.2M2304.8 767.9V779.2M2307.1 772.8V777.7M2308.2 770.3V777.5M2314.8 778.5V783.9M2315.9 776.4V781.5M2317.0 776.1V780.2M2318.1 767.8V776.2M2319.2 769.4V774.6M2320.4 769.1V774.9M2321.5 766.6V770.9M2322.6 765.3V768.0M2323.7 759.1V767.6M2325.9 758.6V766.1M2331.4 764.9V776.6M2332.5 759.6V771.0M2334.8 757.3V763.3M2341.4 770.7V778.8M2343.6 768.4V773.8M2345.8 765.8V777.2M2350.3 774.0V779.9M2351.4 774.1V778.4M2352.5 773.9V780.3M2353.6 773.2V779.3M2354.7 766.6V775.0M2355.8 768.4V777.6M2356.9 765.2V775.0M2358.0 755.9V768.9M2359.1 756.6V762.7M2362.5 758.3V761.7M2364.7 758.1V762.5M2365.8 758.9V760.9M2368.0 760.7V764.4M2371.3 767.4V774.7M2373.5 769.8V776.2M2374.6 769.9V772.6M2375.7 766.6V770.2M2378.0 762.0V775.2M2379.1 758.4V768.9M2381.3 755.1V765.3M2382.4 756.1V762.4M2383.5 757.6V759.7M2384.6 755.4V760.7M2387.9 759.3V769.5M2390.2 764.0V770.6M2391.3 757.9V768.8M2393.5 753.2V770.3M2394.6 752.3V761.5M2395.7 741.6V753.8M1464.6 815V856M1993.7 739V765M2176.8 723.6V745M2396 741V760M2120 757V780M1299 575V598" stroke="#008000" stroke-width="1.6" fill="none"/>
</g>
<text x="60.6" y="948.5" font-family="Liberation Sans, sans-serif" font-weight="bold" font-size="33" fill="#cab3d6" textLength="159.5" lengthAdjust="spacingAndGlyphs">HYBLOCK</text>
<rect x="12" y="1049.5" width="2466" height="14" fill="url(#cbar)"/>
<g font-family="Liberation Sans, sans-serif" font-size="22" fill="#fff">
<g text-anchor="start">
<text transform="translate(2410.6 210) scale(.955 1)">4000.00</text>
<text transform="translate(2410.6 355) scale(.955 1)">3500.00</text>
<text transform="translate(2410.6 500) scale(.955 1)">3000.00</text>
<text transform="translate(2410.6 645) scale(.955 1)">2500.00</text>
<text transform="translate(2410.6 790) scale(.955 1)">2000.00</text>
<text transform="translate(2410.6 934.3) scale(.955 1)">1500.00</text>
</g>
<g text-anchor="middle">
<text transform="translate(135 987.3) scale(.955 1)">18 Dec</text>
<text transform="translate(667 987.3) scale(.955 1)">07 Jan</text>
<text transform="translate(1199 987.3) scale(.955 1)">27 Jan</text>
<text transform="translate(1731 987.3) scale(.955 1)">16 Feb</text>
<text transform="translate(2262 987.3) scale(.955 1)">08 Mar</text>
<text transform="translate(138 1040) scale(.955 1)">200.00K</text>
<text transform="translate(1001.5 1040) scale(.955 1)">400.00K</text>
<text transform="translate(1866 1040) scale(.955 1)">600.00K</text>
</g>
</g>
</svg>
<div class="abs t" id="f1" style="letter-spacing:0.46px;left:11px;top:1112.9px">Last Updated: 13 Mar 2026 08:32 (UTC)</div>
<div class="abs t" id="f2" style="letter-spacing:0.94px;right:7px;top:1112.9px">hyblockcapital.com</div>
</body></html>
